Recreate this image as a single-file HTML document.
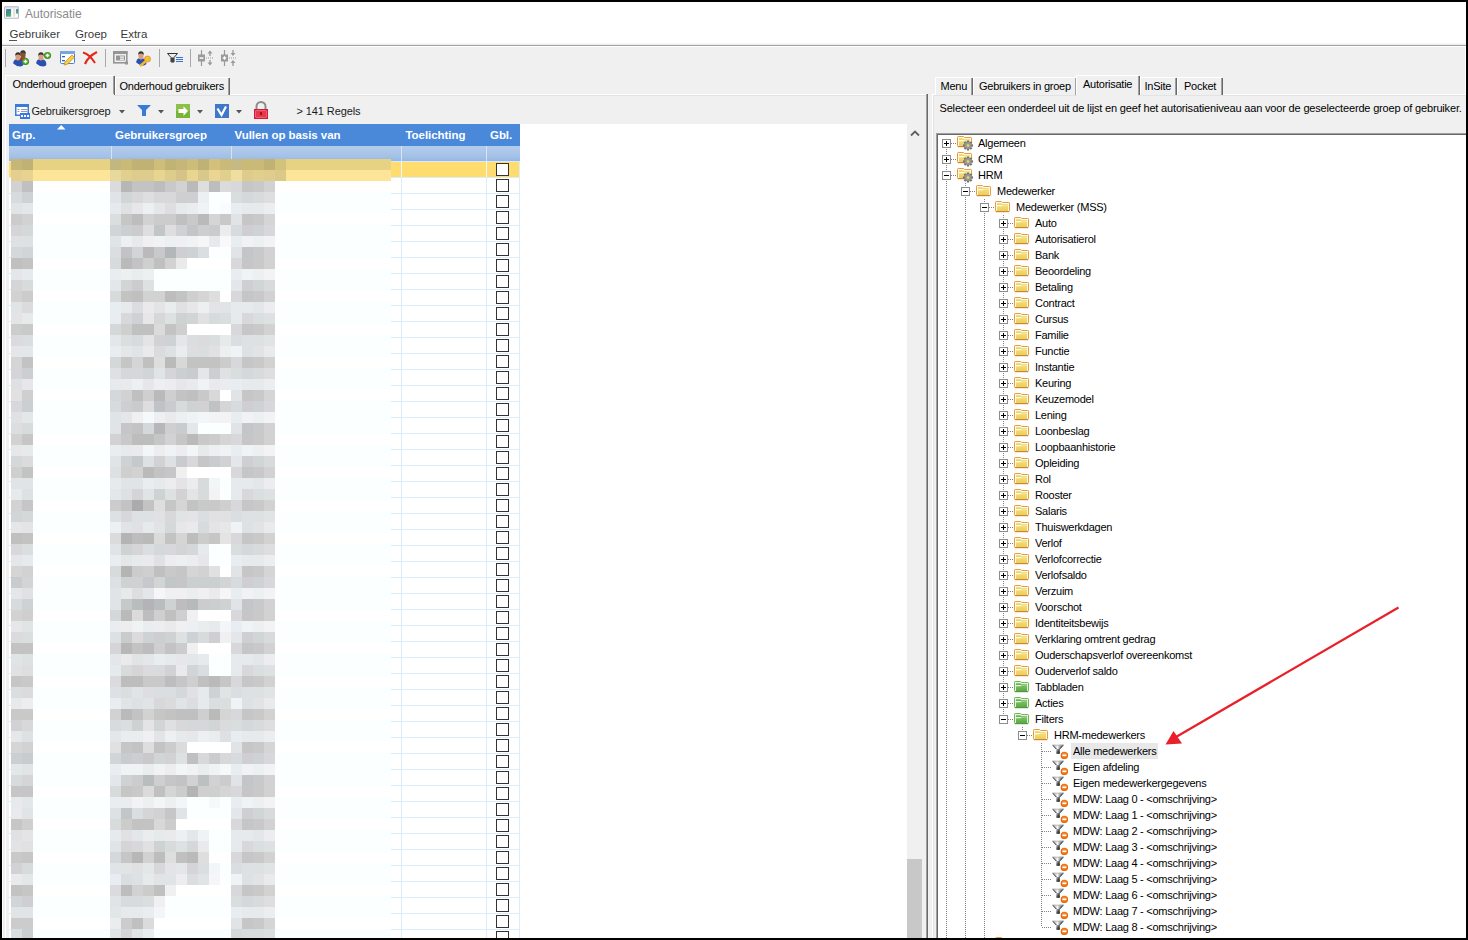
<!DOCTYPE html><html><head><meta charset="utf-8"><style>html,body{margin:0;padding:0;}body{width:1468px;height:940px;position:relative;overflow:hidden;background:#000;font-family:"Liberation Sans", sans-serif;}svg{overflow:visible}</style></head><body><svg width="0" height="0" style="position:absolute"><defs>
<linearGradient id="yg" x1="0" y1="0" x2="0" y2="1"><stop offset="0" stop-color="#f4e07a"/><stop offset="1" stop-color="#e6cf62"/></linearGradient>
<linearGradient id="gg" x1="0" y1="0" x2="0" y2="1"><stop offset="0" stop-color="#7cc265"/><stop offset="1" stop-color="#5ea84a"/></linearGradient>
<symbol id="fold" viewBox="0 0 16 16">
 <path d="M0.5 3.2q0-0.7 0.7-0.7h5.3l1 1h6.3q0.7 0 0.7 0.7v7.6q0 0.7-0.7 0.7h-12.6q-0.7 0-0.7-0.7z" fill="#fffbe8" stroke="#e99a3a" stroke-width="1"/>
 <path d="M2 4.2h4.3l1 1h5.7v0.9h-11z" fill="#ebd46c"/>
 <path d="M2 7.2h4.6l1-1h5.4v5.8h-11z" fill="url(#yg)"/>
 <path d="M1 12.6h13" stroke="#d8822a" stroke-width="1.2"/>
</symbol>
<symbol id="foldg" viewBox="0 0 16 16">
 <path d="M0.5 3.2q0-0.7 0.7-0.7h5.3l1 1h6.3q0.7 0 0.7 0.7v7.6q0 0.7-0.7 0.7h-12.6q-0.7 0-0.7-0.7z" fill="#e8f0e4" stroke="#6cbb4e" stroke-width="1"/>
 <path d="M2 4.2h4.3l1 1h5.7v0.9h-11z" fill="#6cb652"/>
 <path d="M2 7.2h4.6l1-1h5.4v5.8h-11z" fill="url(#gg)"/>
 <path d="M1 12.6h13" stroke="#4e9a3a" stroke-width="1.2"/>
</symbol>
<symbol id="gear" viewBox="0 0 16 16">
 <path d="M0.5 2.2q0-0.7 0.7-0.7h5.3l1 1h6.3q0.7 0 0.7 0.7v7.6q0 0.7-0.7 0.7h-12.6q-0.7 0-0.7-0.7z" fill="#fffbe8" stroke="#e99a3a" stroke-width="1"/>
 <path d="M2 3.2h4.3l1 1h5.7v0.9h-11z" fill="#ebd46c"/>
 <path d="M2 6.2h4.6l1-1h5.4v5.8h-11z" fill="url(#yg)"/>
 <path d="M1 11.6h8" stroke="#d8822a" stroke-width="1.2"/>
 <g transform="translate(11 10.5)">
  <g fill="#707070">
   <rect x="-1.1" y="-5" width="2.2" height="10"/>
   <rect x="-1.1" y="-5" width="2.2" height="10" transform="rotate(45)"/>
   <rect x="-1.1" y="-5" width="2.2" height="10" transform="rotate(90)"/>
   <rect x="-1.1" y="-5" width="2.2" height="10" transform="rotate(135)"/>
  </g>
  <circle r="3.7" fill="#888"/>
  <circle r="3" fill="#9a9a9a"/>
  <rect x="-1.1" y="-1.1" width="2.2" height="2.2" fill="#f6d84a"/>
 </g>
</symbol>
<linearGradient id="fg" x1="0" y1="0" x2="1" y2="0"><stop offset="0" stop-color="#9a9a9a"/><stop offset="0.45" stop-color="#f4f6fa"/><stop offset="1" stop-color="#2a2a2a"/></linearGradient>
<linearGradient id="sg" x1="0" y1="0" x2="1" y2="1"><stop offset="0" stop-color="#c8ccd4"/><stop offset="0.5" stop-color="#555"/><stop offset="1" stop-color="#000"/></linearGradient>
<symbol id="filt" viewBox="0 0 16 16">
 <path d="M0.3 1.8h11.4l-4 4.2v4.8h-3.4v-4.8z" fill="url(#fg)"/>
 <path d="M0.8 2.2h10.4" stroke="#b8b8b8" stroke-width="0.9"/>
 <path d="M0.8 2.3l3.8 4M11.2 2.3l-3.8 4" stroke="#2e2e2e" stroke-width="1"/>
 <path d="M4.3 6h3.4v4.8h-3.4z" fill="url(#sg)"/>
 <circle cx="12.4" cy="12.4" r="3.7" fill="#e26a12"/>
 <circle cx="12.4" cy="12" r="2.6" fill="#f68a2c"/>
 <rect x="10.5" y="11.6" width="3.9" height="1.4" fill="#fff"/>
</symbol>
<symbol id="plus" viewBox="0 0 9 9">
 <rect x="0.5" y="0.5" width="8" height="8" fill="#fff" stroke="#8c8c8c"/>
 <path d="M2 4.5h5M4.5 2v5" stroke="#000" stroke-width="1"/>
</symbol>
<symbol id="minus" viewBox="0 0 9 9">
 <rect x="0.5" y="0.5" width="8" height="8" fill="#fff" stroke="#8c8c8c"/>
 <path d="M2 4.5h5" stroke="#000" stroke-width="1"/>
</symbol>
</defs></svg><div style="position:absolute;left:2px;top:2px;width:1464px;height:936px;background:#f0f0f0;"></div>
<div style="position:absolute;left:2px;top:2px;width:1464px;height:41px;background:#fff;"></div>
<div style="position:absolute;left:2px;top:43px;width:1464px;height:2px;background:linear-gradient(#f8f8f8,#ececec);"></div>
<div style="position:absolute;left:2px;top:45px;width:1464px;height:1px;background:#a0a0a0;"></div>
<div style="position:absolute;left:2px;top:46px;width:1464px;height:1px;background:#fff;"></div>
<div style="position:absolute;left:2px;top:47px;width:1px;height:891px;background:#fff;"></div>
<div style="position:absolute;left:1465px;top:47px;width:1px;height:891px;background:#fff;"></div>
<svg style="position:absolute;left:0;top:0" width="24" height="24" viewBox="0 0 24 24"><defs><linearGradient id="tg" x1="0" y1="0" x2="0.6" y2="1"><stop offset="0" stop-color="#6a88c8"/><stop offset="0.45" stop-color="#3d8a90"/><stop offset="1" stop-color="#5cae68"/></linearGradient></defs><rect x="4.6" y="6.8" width="13.8" height="11.5" rx="0.8" fill="#fff" stroke="#b4b8c0" stroke-width="1.1"/><rect x="5.2" y="7.3" width="12.6" height="1.2" fill="#d0d4da"/><rect x="6" y="9" width="5.1" height="7.7" fill="url(#tg)"/><rect x="12.9" y="9" width="2.5" height="7.7" fill="#e4e4e4"/><rect x="16.1" y="9" width="2" height="4.6" fill="url(#tg)"/></svg>
<div style="position:absolute;left:25px;top:7.84px;font-size:12px;line-height:12px;color:#8a8a8a;font-weight:normal;white-space:nowrap;">Autorisatie</div>
<div style="position:absolute;left:9.5px;top:29.27px;font-size:11.5px;line-height:11.5px;color:#3a3a3a;font-weight:normal;white-space:nowrap;">Gebruiker</div>
<div style="position:absolute;left:75px;top:29.27px;font-size:11.5px;line-height:11.5px;color:#3a3a3a;font-weight:normal;white-space:nowrap;">Groep</div>
<div style="position:absolute;left:120.5px;top:29.27px;font-size:11.5px;line-height:11.5px;color:#3a3a3a;font-weight:normal;white-space:nowrap;">Extra</div>
<div style="position:absolute;left:9px;top:40px;width:8px;height:1px;background:#555;"></div>
<div style="position:absolute;left:82px;top:40px;width:3px;height:1px;background:#555;"></div>
<div style="position:absolute;left:126px;top:40px;width:5px;height:1px;background:#555;"></div>
<div style="position:absolute;left:5px;top:49px;width:1px;height:18px;background:#a8a8a8;"></div>
<div style="position:absolute;left:105px;top:49px;width:1px;height:18px;background:#a8a8a8;"></div>
<div style="position:absolute;left:159px;top:49px;width:1px;height:18px;background:#a8a8a8;"></div>
<div style="position:absolute;left:190px;top:49px;width:1px;height:18px;background:#a8a8a8;"></div>
<svg style="position:absolute;left:0;top:44px" width="260" height="28" viewBox="0 44 260 28"><path d="M18.2 61.5 q0-3.5 3-4.2 l1.8 1 l1.8-1 q3.5 0.8 3.6 5.2 q-0.6 1.8-3 2 q-4 0-7.2-3z" fill="#c02020"/><ellipse cx="23" cy="54.8" rx="2.6" ry="3.6" fill="#8a5030"/><path d="M20.2 53.8 q-0.2-3.6 2.8-3.6 q3 0 2.8 3.8 q-0.8-1.4-2.6-1.6 q-1.8 0-3 1.4z" fill="#333"/><path d="M13.2 63.5 q0-3.5 3-4.2 l1.8 1 l1.8-1 q3.5 0.8 3.6 5.2 q-0.6 1.8-3 2 q-4 0-7.2-3z" fill="#2a4fb0"/><ellipse cx="18" cy="56.8" rx="2.6" ry="3.6" fill="#d9a07a"/><path d="M15.2 55.8 q-0.2-3.6 2.8-3.6 q3 0 2.8 3.8 q-0.8-1.4-2.6-1.6 q-1.8 0-3 1.4z" fill="#333"/><circle cx="25.5" cy="61.5" r="3.6" fill="#3d8f25"/><circle cx="25.5" cy="61.2" r="2.6" fill="#58a838"/><path d="M23.7 61.5h3.6M25.5 59.7v3.6" stroke="#fff" stroke-width="1.3"/><path d="M36.2 63.5 q0-3.5 3-4.2 l1.8 1 l1.8-1 q3.5 0.8 3.6 5.2 q-0.6 1.8-3 2 q-4 0-7.2-3z" fill="#2a4fb0"/><ellipse cx="41" cy="56.8" rx="2.6" ry="3.6" fill="#d9a07a"/><path d="M38.2 55.8 q-0.2-3.6 2.8-3.6 q3 0 2.8 3.8 q-0.8-1.4-2.6-1.6 q-1.8 0-3 1.4z" fill="#333"/><circle cx="47.5" cy="55.5" r="3.6" fill="#3d8f25"/><circle cx="47.5" cy="55.2" r="2.6" fill="#58a838"/><path d="M45.7 55.5h3.6M47.5 53.7v3.6" stroke="#fff" stroke-width="1.3"/><rect x="60.5" y="51.5" width="14" height="12" rx="1" fill="#fff" stroke="#4a7fd0"/><rect x="60" y="51" width="15" height="3" fill="#7aa6e0"/><rect x="62" y="56" width="3" height="1.3" fill="#2a5fd0"/><rect x="62" y="60" width="3" height="1.3" fill="#2a5fd0"/><path d="M64 65 l1-3 l7-7 l2.3 2.3 l-7 7z" fill="#f2d040" stroke="#d08a20" stroke-width="0.8"/><path d="M83 52.5 C88 54 92 58 95 63" stroke="#e02418" stroke-width="2" fill="none"/><path d="M97 52 C91 55 87 59 85 64" stroke="#e8281c" stroke-width="2.2" fill="none"/><rect x="113.8" y="51.8" width="13" height="11" fill="none" stroke="#959595" stroke-width="1.6"/><rect x="113" y="51" width="14.5" height="3" fill="#959595"/><rect x="116" y="55.5" width="9" height="5" fill="#959595"/><rect x="120" y="56.5" width="4" height="1.2" fill="#fff"/><rect x="120" y="58.6" width="4" height="1.2" fill="#fff"/><rect x="125" y="61.5" width="3" height="3" fill="#959595"/><path d="M136.2 62.5 q0-3.5 3-4.2 l1.8 1 l1.8-1 q3.5 0.8 3.6 5.2 q-0.6 1.8-3 2 q-4 0-7.2-3z" fill="#2a4fb0"/><ellipse cx="141" cy="55.8" rx="2.6" ry="3.6" fill="#d9a07a"/><path d="M138.2 54.8 q-0.2-3.6 2.8-3.6 q3 0 2.8 3.8 q-0.8-1.4-2.6-1.6 q-1.8 0-3 1.4z" fill="#333"/><circle cx="147.5" cy="59" r="3" fill="#f2c030" stroke="#e09020" stroke-width="0.8"/><path d="M140 66 l6-5" stroke="#f0b828" stroke-width="2.4"/><path d="M167.5 53.5h10l-3.5 4v4.5h-3v-4.5z" fill="#e8eef4" stroke="#333" stroke-width="1"/><path d="M171 57.5h3v4.5h-3z" fill="#444"/><path d="M176 57.5h7M176 59.5h7M176 61.5h7" stroke="#3a74d0" stroke-width="1"/><path d="M201.5 50v16" stroke="#999" stroke-width="1.2"/><rect x="198" y="54.5" width="7" height="7" fill="#9a9a9a"/><path d="M206 58h8" stroke="#9a9a9a" stroke-width="1.2" stroke-dasharray="1 1"/><rect x="199.6" y="57.3" width="3.8" height="1.5" fill="#fff"/><path d="M210 52v4M210 60v4" stroke="#999" stroke-width="1.3"/><path d="M207.5 53.5l2.5-3l2.5 3zM207.5 62.5l2.5 3l2.5-3z" fill="#999"/><path d="M224.5 50v16" stroke="#999" stroke-width="1.2"/><rect x="221" y="54.5" width="7" height="7" fill="#9a9a9a"/><path d="M229 58h8" stroke="#9a9a9a" stroke-width="1.2" stroke-dasharray="1 1"/><path d="M222.8 58h3.4M224.5 56.3v3.4" stroke="#fff" stroke-width="1.3"/><path d="M233 50v4M233 62v4" stroke="#999" stroke-width="1.3"/><path d="M230.5 53l2.5 3l2.5-3zM230.5 63l2.5-3l2.5 3z" fill="#999"/></svg>
<div style="position:absolute;left:5px;top:94px;width:923px;height:844px;background:#f0f0f0;"></div>
<div style="position:absolute;left:5px;top:94px;width:922px;height:1px;background:#fff;"></div>
<div style="position:absolute;left:5px;top:94px;width:1px;height:844px;background:#fff;"></div>
<div style="position:absolute;left:6px;top:95px;width:920px;height:1px;background:#e3e3e3;"></div>
<div style="position:absolute;left:926px;top:94px;width:1px;height:844px;background:#a0a0a0;"></div>
<div style="position:absolute;left:927px;top:94px;width:1px;height:844px;background:#696969;"></div>
<div style="position:absolute;left:115px;top:77px;width:115px;height:18px;background:#f0f0f0;"></div>
<div style="position:absolute;left:115px;top:77px;width:114px;height:1px;background:#fff;"></div>
<div style="position:absolute;left:115px;top:77px;width:1px;height:18px;background:#fff;"></div>
<div style="position:absolute;left:228px;top:78px;width:1px;height:17px;background:#a0a0a0;"></div>
<div style="position:absolute;left:229px;top:78px;width:1px;height:17px;background:#696969;"></div>
<div style="position:absolute;left:5px;top:75px;width:110px;height:20px;background:#f0f0f0;"></div>
<div style="position:absolute;left:5px;top:75px;width:109px;height:1px;background:#fff;"></div>
<div style="position:absolute;left:5px;top:75px;width:1px;height:20px;background:#fff;"></div>
<div style="position:absolute;left:113px;top:76px;width:1px;height:19px;background:#a0a0a0;"></div>
<div style="position:absolute;left:114px;top:76px;width:1px;height:19px;background:#696969;"></div>
<div style="position:absolute;left:6px;top:94px;width:108px;height:2px;background:#f0f0f0;"></div>
<div style="position:absolute;left:12.5px;top:78.69px;font-size:11px;line-height:11px;color:#000;font-weight:normal;white-space:nowrap;letter-spacing:-0.25px;">Onderhoud groepen</div>
<div style="position:absolute;left:119.5px;top:80.69px;font-size:11px;line-height:11px;color:#000;font-weight:normal;white-space:nowrap;letter-spacing:-0.25px;">Onderhoud gebruikers</div>
<div style="position:absolute;left:31.5px;top:105.69px;font-size:11px;line-height:11px;color:#1a1a1a;font-weight:normal;white-space:nowrap;letter-spacing:-0.2px;">Gebruikersgroep</div>
<div style="position:absolute;left:296.5px;top:106.19px;font-size:11px;line-height:11px;color:#1a1a1a;font-weight:normal;white-space:nowrap;letter-spacing:-0.1px;">&gt; 141 Regels</div>
<svg style="position:absolute;left:0;top:100px" width="280" height="22" viewBox="0 100 280 22"><rect x="15" y="104" width="14" height="12" fill="#3a7ad8"/><rect x="16.5" y="107" width="11" height="7.5" fill="#fff"/><rect x="17.5" y="109" width="2" height="1" fill="#99a"/><rect x="21" y="109" width="6" height="1" fill="#99a"/><rect x="17.5" y="111" width="2" height="1" fill="#99a"/><rect x="21" y="111" width="6" height="1" fill="#99a"/><rect x="20" y="113" width="10" height="6" fill="#3a7ad8"/><rect x="21" y="115" width="2" height="2" fill="#fff"/><rect x="24" y="115" width="2" height="2" fill="#fff"/><rect x="27" y="115" width="2" height="2" fill="#fff"/><path d="M119 110h6l-3 3.5z" fill="#555"/><path d="M158 110h6l-3 3.5z" fill="#555"/><path d="M197 110h6l-3 3.5z" fill="#555"/><path d="M236 110h6l-3 3.5z" fill="#555"/><path d="M137 105h14l-5 5v6h-4v-6z" fill="#3a7ad8"/><rect x="176" y="104" width="14" height="14" fill="#78b43a"/><rect x="176" y="104" width="14" height="7" fill="#8cc048"/><path d="M178.5 109h5v-2.8l4.5 4.8l-4.5 4.8v-2.8h-5z" fill="#fff"/><rect x="215" y="104" width="14" height="14" fill="#3f78c8"/><path d="M217.5 108.5l4 6.5l4.5-8.5" stroke="#fff" stroke-width="2.2" fill="none"/><path d="M256.5 109v-2.5a4.5 4.5 0 0 1 9 0v2.5" stroke="#8c8c8c" stroke-width="2" fill="none"/><rect x="254" y="109" width="14" height="10" fill="#d81838"/><rect x="255.5" y="110.5" width="11" height="7" fill="#f3b0b8"/><rect x="256" y="111" width="10" height="6" fill="#e83848"/><rect x="260" y="112" width="2" height="3" fill="#a01020"/></svg>
<div style="position:absolute;left:9px;top:124px;width:898px;height:814px;background:#fff;"></div>
<div style="position:absolute;left:9px;top:124px;width:511px;height:22px;background:#4a88da;"></div>
<div style="position:absolute;left:9px;top:146px;width:511px;height:15px;background:linear-gradient(#b4cdeb,#a4c1e8 70%,#95b6e2);"></div>
<div style="position:absolute;left:111px;top:146px;width:1px;height:15px;background:#d4e3f5;"></div>
<div style="position:absolute;left:231px;top:146px;width:1px;height:15px;background:#d4e3f5;"></div>
<div style="position:absolute;left:401px;top:146px;width:1px;height:15px;background:#d4e3f5;"></div>
<div style="position:absolute;left:486px;top:146px;width:1px;height:15px;background:#d4e3f5;"></div>
<svg style="position:absolute;left:57px;top:125px" width="9" height="5"><path d="M0 4.5h8.5l-4.25-4.5z" fill="#fff"/></svg>
<div style="position:absolute;left:12px;top:129.77px;font-size:11.5px;line-height:11.5px;color:#fff;font-weight:bold;white-space:nowrap;letter-spacing:-0.05px;">Grp.</div>
<div style="position:absolute;left:115px;top:129.77px;font-size:11.5px;line-height:11.5px;color:#fff;font-weight:bold;white-space:nowrap;letter-spacing:-0.05px;">Gebruikersgroep</div>
<div style="position:absolute;left:234.5px;top:129.77px;font-size:11.5px;line-height:11.5px;color:#fff;font-weight:bold;white-space:nowrap;letter-spacing:-0.05px;">Vullen op basis van</div>
<div style="position:absolute;left:405.5px;top:129.77px;font-size:11.5px;line-height:11.5px;color:#fff;font-weight:bold;white-space:nowrap;letter-spacing:-0.05px;">Toelichting</div>
<div style="position:absolute;left:490px;top:129.77px;font-size:11.5px;line-height:11.5px;color:#fff;font-weight:bold;white-space:nowrap;letter-spacing:-0.05px;">Gbl.</div>
<div style="position:absolute;left:9px;top:161px;width:511px;height:1px;background:#dbeafa;"></div>
<div style="position:absolute;left:9px;top:177px;width:511px;height:1px;background:#daedfc;"></div>
<div style="position:absolute;left:9px;top:193px;width:511px;height:1px;background:#daedfc;"></div>
<div style="position:absolute;left:9px;top:209px;width:511px;height:1px;background:#daedfc;"></div>
<div style="position:absolute;left:9px;top:225px;width:511px;height:1px;background:#daedfc;"></div>
<div style="position:absolute;left:9px;top:241px;width:511px;height:1px;background:#daedfc;"></div>
<div style="position:absolute;left:9px;top:257px;width:511px;height:1px;background:#daedfc;"></div>
<div style="position:absolute;left:9px;top:273px;width:511px;height:1px;background:#daedfc;"></div>
<div style="position:absolute;left:9px;top:289px;width:511px;height:1px;background:#daedfc;"></div>
<div style="position:absolute;left:9px;top:305px;width:511px;height:1px;background:#daedfc;"></div>
<div style="position:absolute;left:9px;top:321px;width:511px;height:1px;background:#daedfc;"></div>
<div style="position:absolute;left:9px;top:337px;width:511px;height:1px;background:#daedfc;"></div>
<div style="position:absolute;left:9px;top:353px;width:511px;height:1px;background:#daedfc;"></div>
<div style="position:absolute;left:9px;top:369px;width:511px;height:1px;background:#daedfc;"></div>
<div style="position:absolute;left:9px;top:385px;width:511px;height:1px;background:#daedfc;"></div>
<div style="position:absolute;left:9px;top:401px;width:511px;height:1px;background:#daedfc;"></div>
<div style="position:absolute;left:9px;top:417px;width:511px;height:1px;background:#daedfc;"></div>
<div style="position:absolute;left:9px;top:433px;width:511px;height:1px;background:#daedfc;"></div>
<div style="position:absolute;left:9px;top:449px;width:511px;height:1px;background:#daedfc;"></div>
<div style="position:absolute;left:9px;top:465px;width:511px;height:1px;background:#daedfc;"></div>
<div style="position:absolute;left:9px;top:481px;width:511px;height:1px;background:#daedfc;"></div>
<div style="position:absolute;left:9px;top:497px;width:511px;height:1px;background:#daedfc;"></div>
<div style="position:absolute;left:9px;top:513px;width:511px;height:1px;background:#daedfc;"></div>
<div style="position:absolute;left:9px;top:529px;width:511px;height:1px;background:#daedfc;"></div>
<div style="position:absolute;left:9px;top:545px;width:511px;height:1px;background:#daedfc;"></div>
<div style="position:absolute;left:9px;top:561px;width:511px;height:1px;background:#daedfc;"></div>
<div style="position:absolute;left:9px;top:577px;width:511px;height:1px;background:#daedfc;"></div>
<div style="position:absolute;left:9px;top:593px;width:511px;height:1px;background:#daedfc;"></div>
<div style="position:absolute;left:9px;top:609px;width:511px;height:1px;background:#daedfc;"></div>
<div style="position:absolute;left:9px;top:625px;width:511px;height:1px;background:#daedfc;"></div>
<div style="position:absolute;left:9px;top:641px;width:511px;height:1px;background:#daedfc;"></div>
<div style="position:absolute;left:9px;top:657px;width:511px;height:1px;background:#daedfc;"></div>
<div style="position:absolute;left:9px;top:673px;width:511px;height:1px;background:#daedfc;"></div>
<div style="position:absolute;left:9px;top:689px;width:511px;height:1px;background:#daedfc;"></div>
<div style="position:absolute;left:9px;top:705px;width:511px;height:1px;background:#daedfc;"></div>
<div style="position:absolute;left:9px;top:721px;width:511px;height:1px;background:#daedfc;"></div>
<div style="position:absolute;left:9px;top:737px;width:511px;height:1px;background:#daedfc;"></div>
<div style="position:absolute;left:9px;top:753px;width:511px;height:1px;background:#daedfc;"></div>
<div style="position:absolute;left:9px;top:769px;width:511px;height:1px;background:#daedfc;"></div>
<div style="position:absolute;left:9px;top:785px;width:511px;height:1px;background:#daedfc;"></div>
<div style="position:absolute;left:9px;top:801px;width:511px;height:1px;background:#daedfc;"></div>
<div style="position:absolute;left:9px;top:817px;width:511px;height:1px;background:#daedfc;"></div>
<div style="position:absolute;left:9px;top:833px;width:511px;height:1px;background:#daedfc;"></div>
<div style="position:absolute;left:9px;top:849px;width:511px;height:1px;background:#daedfc;"></div>
<div style="position:absolute;left:9px;top:865px;width:511px;height:1px;background:#daedfc;"></div>
<div style="position:absolute;left:9px;top:881px;width:511px;height:1px;background:#daedfc;"></div>
<div style="position:absolute;left:9px;top:897px;width:511px;height:1px;background:#daedfc;"></div>
<div style="position:absolute;left:9px;top:913px;width:511px;height:1px;background:#daedfc;"></div>
<div style="position:absolute;left:9px;top:929px;width:511px;height:1px;background:#daedfc;"></div>
<div style="position:absolute;left:9px;top:945px;width:511px;height:1px;background:#daedfc;"></div>
<div style="position:absolute;left:111px;top:162px;width:1px;height:776px;background:#daedfc;"></div>
<div style="position:absolute;left:231px;top:162px;width:1px;height:776px;background:#daedfc;"></div>
<div style="position:absolute;left:401px;top:162px;width:1px;height:776px;background:#daedfc;"></div>
<div style="position:absolute;left:486px;top:162px;width:1px;height:776px;background:#daedfc;"></div>
<div style="position:absolute;left:519px;top:162px;width:1px;height:776px;background:#daedfc;"></div>
<div style="position:absolute;left:9px;top:162px;width:510px;height:15px;background:#fedc6e;"></div>
<div style="position:absolute;left:111px;top:162px;width:1px;height:15px;background:#f0f6fd;"></div>
<div style="position:absolute;left:231px;top:162px;width:1px;height:15px;background:#f0f6fd;"></div>
<div style="position:absolute;left:401px;top:162px;width:1px;height:15px;background:#f0f6fd;"></div>
<div style="position:absolute;left:486px;top:162px;width:1px;height:15px;background:#f0f6fd;"></div>
<div style="position:absolute;left:496px;top:163px;width:11px;height:11px;background:#fff;border:1px solid #333;"></div>
<div style="position:absolute;left:496px;top:179px;width:11px;height:11px;background:#fff;border:1px solid #333;"></div>
<div style="position:absolute;left:496px;top:195px;width:11px;height:11px;background:#fff;border:1px solid #333;"></div>
<div style="position:absolute;left:496px;top:211px;width:11px;height:11px;background:#fff;border:1px solid #333;"></div>
<div style="position:absolute;left:496px;top:227px;width:11px;height:11px;background:#fff;border:1px solid #333;"></div>
<div style="position:absolute;left:496px;top:243px;width:11px;height:11px;background:#fff;border:1px solid #333;"></div>
<div style="position:absolute;left:496px;top:259px;width:11px;height:11px;background:#fff;border:1px solid #333;"></div>
<div style="position:absolute;left:496px;top:275px;width:11px;height:11px;background:#fff;border:1px solid #333;"></div>
<div style="position:absolute;left:496px;top:291px;width:11px;height:11px;background:#fff;border:1px solid #333;"></div>
<div style="position:absolute;left:496px;top:307px;width:11px;height:11px;background:#fff;border:1px solid #333;"></div>
<div style="position:absolute;left:496px;top:323px;width:11px;height:11px;background:#fff;border:1px solid #333;"></div>
<div style="position:absolute;left:496px;top:339px;width:11px;height:11px;background:#fff;border:1px solid #333;"></div>
<div style="position:absolute;left:496px;top:355px;width:11px;height:11px;background:#fff;border:1px solid #333;"></div>
<div style="position:absolute;left:496px;top:371px;width:11px;height:11px;background:#fff;border:1px solid #333;"></div>
<div style="position:absolute;left:496px;top:387px;width:11px;height:11px;background:#fff;border:1px solid #333;"></div>
<div style="position:absolute;left:496px;top:403px;width:11px;height:11px;background:#fff;border:1px solid #333;"></div>
<div style="position:absolute;left:496px;top:419px;width:11px;height:11px;background:#fff;border:1px solid #333;"></div>
<div style="position:absolute;left:496px;top:435px;width:11px;height:11px;background:#fff;border:1px solid #333;"></div>
<div style="position:absolute;left:496px;top:451px;width:11px;height:11px;background:#fff;border:1px solid #333;"></div>
<div style="position:absolute;left:496px;top:467px;width:11px;height:11px;background:#fff;border:1px solid #333;"></div>
<div style="position:absolute;left:496px;top:483px;width:11px;height:11px;background:#fff;border:1px solid #333;"></div>
<div style="position:absolute;left:496px;top:499px;width:11px;height:11px;background:#fff;border:1px solid #333;"></div>
<div style="position:absolute;left:496px;top:515px;width:11px;height:11px;background:#fff;border:1px solid #333;"></div>
<div style="position:absolute;left:496px;top:531px;width:11px;height:11px;background:#fff;border:1px solid #333;"></div>
<div style="position:absolute;left:496px;top:547px;width:11px;height:11px;background:#fff;border:1px solid #333;"></div>
<div style="position:absolute;left:496px;top:563px;width:11px;height:11px;background:#fff;border:1px solid #333;"></div>
<div style="position:absolute;left:496px;top:579px;width:11px;height:11px;background:#fff;border:1px solid #333;"></div>
<div style="position:absolute;left:496px;top:595px;width:11px;height:11px;background:#fff;border:1px solid #333;"></div>
<div style="position:absolute;left:496px;top:611px;width:11px;height:11px;background:#fff;border:1px solid #333;"></div>
<div style="position:absolute;left:496px;top:627px;width:11px;height:11px;background:#fff;border:1px solid #333;"></div>
<div style="position:absolute;left:496px;top:643px;width:11px;height:11px;background:#fff;border:1px solid #333;"></div>
<div style="position:absolute;left:496px;top:659px;width:11px;height:11px;background:#fff;border:1px solid #333;"></div>
<div style="position:absolute;left:496px;top:675px;width:11px;height:11px;background:#fff;border:1px solid #333;"></div>
<div style="position:absolute;left:496px;top:691px;width:11px;height:11px;background:#fff;border:1px solid #333;"></div>
<div style="position:absolute;left:496px;top:707px;width:11px;height:11px;background:#fff;border:1px solid #333;"></div>
<div style="position:absolute;left:496px;top:723px;width:11px;height:11px;background:#fff;border:1px solid #333;"></div>
<div style="position:absolute;left:496px;top:739px;width:11px;height:11px;background:#fff;border:1px solid #333;"></div>
<div style="position:absolute;left:496px;top:755px;width:11px;height:11px;background:#fff;border:1px solid #333;"></div>
<div style="position:absolute;left:496px;top:771px;width:11px;height:11px;background:#fff;border:1px solid #333;"></div>
<div style="position:absolute;left:496px;top:787px;width:11px;height:11px;background:#fff;border:1px solid #333;"></div>
<div style="position:absolute;left:496px;top:803px;width:11px;height:11px;background:#fff;border:1px solid #333;"></div>
<div style="position:absolute;left:496px;top:819px;width:11px;height:11px;background:#fff;border:1px solid #333;"></div>
<div style="position:absolute;left:496px;top:835px;width:11px;height:11px;background:#fff;border:1px solid #333;"></div>
<div style="position:absolute;left:496px;top:851px;width:11px;height:11px;background:#fff;border:1px solid #333;"></div>
<div style="position:absolute;left:496px;top:867px;width:11px;height:11px;background:#fff;border:1px solid #333;"></div>
<div style="position:absolute;left:496px;top:883px;width:11px;height:11px;background:#fff;border:1px solid #333;"></div>
<div style="position:absolute;left:496px;top:899px;width:11px;height:11px;background:#fff;border:1px solid #333;"></div>
<div style="position:absolute;left:496px;top:915px;width:11px;height:11px;background:#fff;border:1px solid #333;"></div>
<div style="position:absolute;left:496px;top:931px;width:11px;height:11px;background:#fff;border:1px solid #333;"></div>
<div style="position:absolute;left:907px;top:124px;width:15px;height:814px;background:#f0f0f0;"></div>
<svg style="position:absolute;left:910px;top:129px" width="10" height="8"><path d="M1 6.5l4-4l4 4" stroke="#606060" stroke-width="1.8" fill="none"/></svg>
<div style="position:absolute;left:907px;top:859px;width:15px;height:79px;background:#c8c8c8;"></div>
<div style="position:absolute;left:11px;top:159px;width:380px;height:779px;background:#fff"></div>
<svg style="position:absolute;left:0;top:0" width="520" height="940"><path fill="#c6b778" d="M11 159h11v11h-11zM176 159h11v11h-11z"/><path fill="#c0b175" d="M22 159h11v11h-11zM132 159h11v11h-11zM143 159h11v11h-11zM198 159h11v11h-11zM264 159h11v11h-11z"/><path fill="#e7d284" d="M33 159h11v11h-11zM44 159h11v11h-11zM55 159h11v11h-11zM66 159h11v11h-11zM77 159h11v11h-11zM88 159h11v11h-11zM99 159h11v11h-11zM286 159h11v11h-11zM297 159h11v11h-11zM308 159h11v11h-11zM319 159h11v11h-11zM330 159h11v11h-11zM341 159h11v11h-11zM352 159h11v11h-11zM363 159h11v11h-11zM374 159h11v11h-11zM385 159h6v11h-6z"/><path fill="#c3b781" d="M110 159h11v11h-11z"/><path fill="#c9ba78" d="M121 159h11v11h-11zM220 159h11v11h-11zM242 159h11v11h-11zM253 159h11v11h-11z"/><path fill="#cfbd7b" d="M154 159h11v11h-11z"/><path fill="#c0b475" d="M165 159h11v11h-11z"/><path fill="#ccbd7b" d="M187 159h11v11h-11z"/><path fill="#d2c07b" d="M209 159h11v11h-11z"/><path fill="#c6ba84" d="M231 159h11v11h-11z"/><path fill="#d2c37b" d="M275 159h11v11h-11z"/><path fill="#e4cf90" d="M11 170h11v11h-11z"/><path fill="#e7d290" d="M22 170h11v11h-11z"/><path fill="#fce499" d="M33 170h11v11h-11zM44 170h11v11h-11zM55 170h11v11h-11zM66 170h11v11h-11zM77 170h11v11h-11zM88 170h11v11h-11zM99 170h11v11h-11zM286 170h11v11h-11zM297 170h11v11h-11zM308 170h11v11h-11zM319 170h11v11h-11zM330 170h11v11h-11zM341 170h11v11h-11zM352 170h11v11h-11zM363 170h11v11h-11zM374 170h11v11h-11zM385 170h6v11h-6z"/><path fill="#e7d89c" d="M110 170h11v11h-11z"/><path fill="#e1cf8d" d="M121 170h11v11h-11zM220 170h11v11h-11zM253 170h11v11h-11z"/><path fill="#decc8d" d="M132 170h11v11h-11zM143 170h11v11h-11zM165 170h11v11h-11zM242 170h11v11h-11z"/><path fill="#e7d590" d="M154 170h11v11h-11z"/><path fill="#d5c38a" d="M176 170h11v11h-11z"/><path fill="#ead590" d="M187 170h11v11h-11z"/><path fill="#d8c98a" d="M198 170h11v11h-11z"/><path fill="#ead593" d="M209 170h11v11h-11z"/><path fill="#f0de9f" d="M231 170h11v11h-11z"/><path fill="#e1cc8d" d="M264 170h11v11h-11z"/><path fill="#dbc98a" d="M275 170h11v11h-11z"/><path fill="#d2d2d2" d="M11 181h11v11h-11zM176 181h11v11h-11zM264 181h11v11h-11zM22 214h11v11h-11zM143 214h11v11h-11zM165 258h11v11h-11zM264 258h11v11h-11zM11 291h11v11h-11zM143 291h11v11h-11zM154 291h11v11h-11zM264 291h11v11h-11zM264 324h11v11h-11zM264 357h11v11h-11zM121 390h11v11h-11zM11 434h11v11h-11zM165 434h11v11h-11zM264 434h11v11h-11zM132 467h11v11h-11zM264 467h11v11h-11zM11 500h11v11h-11zM264 500h11v11h-11zM264 533h11v11h-11zM22 566h11v11h-11zM198 566h11v11h-11zM11 610h11v11h-11zM264 610h11v11h-11zM264 643h11v11h-11zM264 676h11v11h-11zM143 709h11v11h-11zM264 709h11v11h-11zM22 742h11v11h-11zM264 786h11v11h-11zM264 819h11v11h-11zM143 852h11v11h-11zM264 852h11v11h-11zM132 885h11v11h-11zM264 885h11v11h-11z"/><path fill="#c0c0c0" d="M22 181h11v11h-11zM176 214h11v11h-11zM11 258h11v11h-11zM154 258h11v11h-11zM132 291h11v11h-11zM132 324h11v11h-11zM143 324h11v11h-11zM143 357h11v11h-11zM132 390h11v11h-11zM187 390h11v11h-11zM11 533h11v11h-11zM154 566h11v11h-11zM165 610h11v11h-11zM198 676h11v11h-11zM176 709h11v11h-11zM187 709h11v11h-11zM154 786h11v11h-11zM176 852h11v11h-11zM154 885h11v11h-11zM132 918h11v11h-11z"/><path fill="#dbdbde" d="M110 181h11v11h-11zM22 302h11v11h-11zM11 335h11v11h-11zM198 335h11v11h-11zM154 346h11v11h-11zM22 456h11v11h-11zM110 533h11v11h-11zM11 632h11v11h-11zM132 632h11v11h-11zM143 665h11v11h-11zM110 676h11v11h-11zM22 687h11v11h-11zM165 698h11v11h-11zM220 720h11v11h-11zM110 885h11v11h-11z"/><path fill="#b7b7b7" d="M121 181h11v11h-11zM121 643h11v11h-11zM132 852h11v11h-11z"/><path fill="#c3c3c3" d="M132 181h11v11h-11zM143 181h11v11h-11zM22 258h11v11h-11zM132 258h11v11h-11zM121 291h11v11h-11zM176 291h11v11h-11zM165 324h11v11h-11zM22 357h11v11h-11zM187 357h11v11h-11zM198 357h11v11h-11zM209 357h11v11h-11zM176 390h11v11h-11zM22 467h11v11h-11zM154 467h11v11h-11zM121 500h11v11h-11zM143 500h11v11h-11zM187 500h11v11h-11zM22 533h11v11h-11zM165 533h11v11h-11zM11 643h11v11h-11zM22 643h11v11h-11zM132 643h11v11h-11zM165 643h11v11h-11zM132 709h11v11h-11zM165 709h11v11h-11zM132 742h11v11h-11zM154 742h11v11h-11zM132 819h11v11h-11zM143 819h11v11h-11zM11 885h11v11h-11z"/><path fill="#bdbdbd" d="M154 181h11v11h-11zM209 181h11v11h-11zM132 214h11v11h-11zM165 291h11v11h-11zM132 434h11v11h-11zM143 434h11v11h-11zM132 533h11v11h-11zM187 533h11v11h-11zM143 610h11v11h-11zM143 643h11v11h-11zM121 676h11v11h-11zM132 676h11v11h-11zM165 676h11v11h-11zM154 852h11v11h-11zM121 885h11v11h-11z"/><path fill="#c9c9c9" d="M165 181h11v11h-11zM253 181h11v11h-11zM187 214h11v11h-11zM220 214h11v11h-11zM253 214h11v11h-11zM253 258h11v11h-11zM253 291h11v11h-11zM22 324h11v11h-11zM253 324h11v11h-11zM253 357h11v11h-11zM198 390h11v11h-11zM253 390h11v11h-11zM121 434h11v11h-11zM198 434h11v11h-11zM253 434h11v11h-11zM253 467h11v11h-11zM198 500h11v11h-11zM209 500h11v11h-11zM253 500h11v11h-11zM253 533h11v11h-11zM165 566h11v11h-11zM253 566h11v11h-11zM253 610h11v11h-11zM253 643h11v11h-11zM22 676h11v11h-11zM143 676h11v11h-11zM154 676h11v11h-11zM253 676h11v11h-11zM11 709h11v11h-11zM22 709h11v11h-11zM253 709h11v11h-11zM253 742h11v11h-11zM132 786h11v11h-11zM253 786h11v11h-11zM253 819h11v11h-11zM11 852h11v11h-11zM253 852h11v11h-11zM253 885h11v11h-11zM253 918h11v11h-11z"/><path fill="#bababa" d="M187 181h11v11h-11zM198 214h11v11h-11zM121 258h11v11h-11zM165 357h11v11h-11zM154 390h11v11h-11zM187 434h11v11h-11zM143 467h11v11h-11zM143 533h11v11h-11zM121 610h11v11h-11zM209 676h11v11h-11zM121 709h11v11h-11zM209 709h11v11h-11zM187 852h11v11h-11z"/><path fill="#dedede" d="M198 181h11v11h-11zM209 291h11v11h-11zM154 357h11v11h-11zM154 500h11v11h-11zM143 742h11v11h-11zM165 852h11v11h-11zM198 852h11v11h-11z"/><path fill="#dbdbdb" d="M220 181h11v11h-11zM154 324h11v11h-11zM154 533h11v11h-11zM132 610h11v11h-11zM176 742h11v11h-11zM143 786h11v11h-11zM143 918h11v11h-11z"/><path fill="#d8d8db" d="M231 181h11v11h-11zM132 192h11v11h-11zM154 192h11v11h-11zM165 192h11v11h-11zM264 225h11v11h-11zM231 258h11v11h-11zM231 291h11v11h-11zM121 313h11v11h-11zM242 313h11v11h-11zM231 324h11v11h-11zM231 357h11v11h-11zM11 401h11v11h-11zM264 401h11v11h-11zM231 434h11v11h-11zM187 456h11v11h-11zM231 467h11v11h-11zM242 489h11v11h-11zM231 500h11v11h-11zM121 511h11v11h-11zM165 511h11v11h-11zM231 533h11v11h-11zM11 544h11v11h-11zM165 544h11v11h-11zM264 577h11v11h-11zM231 610h11v11h-11zM231 643h11v11h-11zM242 665h11v11h-11zM231 676h11v11h-11zM154 698h11v11h-11zM231 709h11v11h-11zM22 720h11v11h-11zM176 720h11v11h-11zM198 753h11v11h-11zM220 753h11v11h-11zM264 753h11v11h-11zM231 786h11v11h-11zM231 819h11v11h-11zM132 841h11v11h-11zM242 841h11v11h-11zM231 852h11v11h-11zM154 863h11v11h-11zM231 885h11v11h-11z"/><path fill="#c6c6c6" d="M242 181h11v11h-11zM121 214h11v11h-11zM242 214h11v11h-11zM242 258h11v11h-11zM242 291h11v11h-11zM242 324h11v11h-11zM121 357h11v11h-11zM242 357h11v11h-11zM242 390h11v11h-11zM22 434h11v11h-11zM154 434h11v11h-11zM176 434h11v11h-11zM242 434h11v11h-11zM165 467h11v11h-11zM242 467h11v11h-11zM22 500h11v11h-11zM165 500h11v11h-11zM242 500h11v11h-11zM209 533h11v11h-11zM242 533h11v11h-11zM176 566h11v11h-11zM242 566h11v11h-11zM242 610h11v11h-11zM242 643h11v11h-11zM11 676h11v11h-11zM176 676h11v11h-11zM220 676h11v11h-11zM242 676h11v11h-11zM154 709h11v11h-11zM242 709h11v11h-11zM121 742h11v11h-11zM242 742h11v11h-11zM11 786h11v11h-11zM22 786h11v11h-11zM121 786h11v11h-11zM242 786h11v11h-11zM11 819h11v11h-11zM242 819h11v11h-11zM22 852h11v11h-11zM121 852h11v11h-11zM242 852h11v11h-11zM22 885h11v11h-11zM242 885h11v11h-11zM242 918h11v11h-11z"/><path fill="#d8dbde" d="M11 192h11v11h-11zM231 225h11v11h-11zM132 335h11v11h-11zM110 401h11v11h-11zM231 401h11v11h-11zM231 577h11v11h-11zM11 599h11v11h-11zM110 720h11v11h-11zM231 753h11v11h-11zM132 896h11v11h-11z"/><path fill="#cfd2d2" d="M22 192h11v11h-11zM176 313h11v11h-11zM187 401h11v11h-11zM121 456h11v11h-11zM154 489h11v11h-11zM121 544h11v11h-11zM121 577h11v11h-11zM132 577h11v11h-11zM22 599h11v11h-11zM165 599h11v11h-11zM220 599h11v11h-11zM143 632h11v11h-11zM165 632h11v11h-11zM132 720h11v11h-11zM121 775h11v11h-11zM154 841h11v11h-11z"/><path fill="#fcffff" d="M33 192h11v11h-11zM44 192h11v11h-11zM55 192h11v11h-11zM66 192h11v11h-11zM77 192h11v11h-11zM88 192h11v11h-11zM99 192h11v11h-11zM209 192h11v11h-11zM220 192h11v11h-11zM275 192h11v11h-11zM286 192h11v11h-11zM297 192h11v11h-11zM308 192h11v11h-11zM319 192h11v11h-11zM330 192h11v11h-11zM341 192h11v11h-11zM352 192h11v11h-11zM363 192h11v11h-11zM374 192h11v11h-11zM385 192h6v11h-6zM33 203h11v11h-11zM44 203h11v11h-11zM55 203h11v11h-11zM66 203h11v11h-11zM77 203h11v11h-11zM88 203h11v11h-11zM99 203h11v11h-11zM209 203h11v11h-11zM275 203h11v11h-11zM286 203h11v11h-11zM297 203h11v11h-11zM308 203h11v11h-11zM319 203h11v11h-11zM330 203h11v11h-11zM341 203h11v11h-11zM352 203h11v11h-11zM363 203h11v11h-11zM374 203h11v11h-11zM385 203h6v11h-6zM33 225h11v11h-11zM44 225h11v11h-11zM55 225h11v11h-11zM66 225h11v11h-11zM77 225h11v11h-11zM88 225h11v11h-11zM99 225h11v11h-11zM275 225h11v11h-11zM286 225h11v11h-11zM297 225h11v11h-11zM308 225h11v11h-11zM319 225h11v11h-11zM330 225h11v11h-11zM341 225h11v11h-11zM352 225h11v11h-11zM363 225h11v11h-11zM374 225h11v11h-11zM385 225h6v11h-6zM33 236h11v11h-11zM44 236h11v11h-11zM55 236h11v11h-11zM66 236h11v11h-11zM77 236h11v11h-11zM88 236h11v11h-11zM99 236h11v11h-11zM275 236h11v11h-11zM286 236h11v11h-11zM297 236h11v11h-11zM308 236h11v11h-11zM319 236h11v11h-11zM330 236h11v11h-11zM341 236h11v11h-11zM352 236h11v11h-11zM363 236h11v11h-11zM374 236h11v11h-11zM385 236h6v11h-6zM33 247h11v11h-11zM44 247h11v11h-11zM55 247h11v11h-11zM66 247h11v11h-11zM77 247h11v11h-11zM88 247h11v11h-11zM99 247h11v11h-11zM209 247h11v11h-11zM220 247h11v11h-11zM275 247h11v11h-11zM286 247h11v11h-11zM297 247h11v11h-11zM308 247h11v11h-11zM319 247h11v11h-11zM330 247h11v11h-11zM341 247h11v11h-11zM352 247h11v11h-11zM363 247h11v11h-11zM374 247h11v11h-11zM385 247h6v11h-6zM33 269h11v11h-11zM44 269h11v11h-11zM55 269h11v11h-11zM66 269h11v11h-11zM77 269h11v11h-11zM88 269h11v11h-11zM99 269h11v11h-11zM154 269h11v11h-11zM165 269h11v11h-11zM176 269h11v11h-11zM187 269h11v11h-11zM198 269h11v11h-11zM209 269h11v11h-11zM220 269h11v11h-11zM275 269h11v11h-11zM286 269h11v11h-11zM297 269h11v11h-11zM308 269h11v11h-11zM319 269h11v11h-11zM330 269h11v11h-11zM341 269h11v11h-11zM352 269h11v11h-11zM363 269h11v11h-11zM374 269h11v11h-11zM385 269h6v11h-6zM33 280h11v11h-11zM44 280h11v11h-11zM55 280h11v11h-11zM66 280h11v11h-11zM77 280h11v11h-11zM88 280h11v11h-11zM99 280h11v11h-11zM154 280h11v11h-11zM165 280h11v11h-11zM176 280h11v11h-11zM187 280h11v11h-11zM198 280h11v11h-11zM209 280h11v11h-11zM220 280h11v11h-11zM275 280h11v11h-11zM286 280h11v11h-11zM297 280h11v11h-11zM308 280h11v11h-11zM319 280h11v11h-11zM330 280h11v11h-11zM341 280h11v11h-11zM352 280h11v11h-11zM363 280h11v11h-11zM374 280h11v11h-11zM385 280h6v11h-6zM33 302h11v11h-11zM44 302h11v11h-11zM55 302h11v11h-11zM66 302h11v11h-11zM77 302h11v11h-11zM88 302h11v11h-11zM99 302h11v11h-11zM275 302h11v11h-11zM286 302h11v11h-11zM297 302h11v11h-11zM308 302h11v11h-11zM319 302h11v11h-11zM330 302h11v11h-11zM341 302h11v11h-11zM352 302h11v11h-11zM363 302h11v11h-11zM374 302h11v11h-11zM385 302h6v11h-6zM33 313h11v11h-11zM44 313h11v11h-11zM55 313h11v11h-11zM66 313h11v11h-11zM77 313h11v11h-11zM88 313h11v11h-11zM99 313h11v11h-11zM275 313h11v11h-11zM286 313h11v11h-11zM297 313h11v11h-11zM308 313h11v11h-11zM319 313h11v11h-11zM330 313h11v11h-11zM341 313h11v11h-11zM352 313h11v11h-11zM363 313h11v11h-11zM374 313h11v11h-11zM385 313h6v11h-6zM33 335h11v11h-11zM44 335h11v11h-11zM55 335h11v11h-11zM66 335h11v11h-11zM77 335h11v11h-11zM88 335h11v11h-11zM99 335h11v11h-11zM275 335h11v11h-11zM286 335h11v11h-11zM297 335h11v11h-11zM308 335h11v11h-11zM319 335h11v11h-11zM330 335h11v11h-11zM341 335h11v11h-11zM352 335h11v11h-11zM363 335h11v11h-11zM374 335h11v11h-11zM385 335h6v11h-6zM33 346h11v11h-11zM44 346h11v11h-11zM55 346h11v11h-11zM66 346h11v11h-11zM77 346h11v11h-11zM88 346h11v11h-11zM99 346h11v11h-11zM275 346h11v11h-11zM286 346h11v11h-11zM297 346h11v11h-11zM308 346h11v11h-11zM319 346h11v11h-11zM330 346h11v11h-11zM341 346h11v11h-11zM352 346h11v11h-11zM363 346h11v11h-11zM374 346h11v11h-11zM385 346h6v11h-6zM33 368h11v11h-11zM44 368h11v11h-11zM55 368h11v11h-11zM66 368h11v11h-11zM77 368h11v11h-11zM88 368h11v11h-11zM99 368h11v11h-11zM275 368h11v11h-11zM286 368h11v11h-11zM297 368h11v11h-11zM308 368h11v11h-11zM319 368h11v11h-11zM330 368h11v11h-11zM341 368h11v11h-11zM352 368h11v11h-11zM363 368h11v11h-11zM374 368h11v11h-11zM385 368h6v11h-6zM33 379h11v11h-11zM44 379h11v11h-11zM55 379h11v11h-11zM66 379h11v11h-11zM77 379h11v11h-11zM88 379h11v11h-11zM99 379h11v11h-11zM275 379h11v11h-11zM286 379h11v11h-11zM297 379h11v11h-11zM308 379h11v11h-11zM319 379h11v11h-11zM330 379h11v11h-11zM341 379h11v11h-11zM352 379h11v11h-11zM363 379h11v11h-11zM374 379h11v11h-11zM385 379h6v11h-6zM33 401h11v11h-11zM44 401h11v11h-11zM55 401h11v11h-11zM66 401h11v11h-11zM77 401h11v11h-11zM88 401h11v11h-11zM99 401h11v11h-11zM275 401h11v11h-11zM286 401h11v11h-11zM297 401h11v11h-11zM308 401h11v11h-11zM319 401h11v11h-11zM330 401h11v11h-11zM341 401h11v11h-11zM352 401h11v11h-11zM363 401h11v11h-11zM374 401h11v11h-11zM385 401h6v11h-6zM33 412h11v11h-11zM44 412h11v11h-11zM55 412h11v11h-11zM66 412h11v11h-11zM77 412h11v11h-11zM88 412h11v11h-11zM99 412h11v11h-11zM275 412h11v11h-11zM286 412h11v11h-11zM297 412h11v11h-11zM308 412h11v11h-11zM319 412h11v11h-11zM330 412h11v11h-11zM341 412h11v11h-11zM352 412h11v11h-11zM363 412h11v11h-11zM374 412h11v11h-11zM385 412h6v11h-6zM33 423h11v11h-11zM44 423h11v11h-11zM55 423h11v11h-11zM66 423h11v11h-11zM77 423h11v11h-11zM88 423h11v11h-11zM99 423h11v11h-11zM198 423h11v11h-11zM209 423h11v11h-11zM220 423h11v11h-11zM275 423h11v11h-11zM286 423h11v11h-11zM297 423h11v11h-11zM308 423h11v11h-11zM319 423h11v11h-11zM330 423h11v11h-11zM341 423h11v11h-11zM352 423h11v11h-11zM363 423h11v11h-11zM374 423h11v11h-11zM385 423h6v11h-6zM33 445h11v11h-11zM44 445h11v11h-11zM55 445h11v11h-11zM66 445h11v11h-11zM77 445h11v11h-11zM88 445h11v11h-11zM99 445h11v11h-11zM275 445h11v11h-11zM286 445h11v11h-11zM297 445h11v11h-11zM308 445h11v11h-11zM319 445h11v11h-11zM330 445h11v11h-11zM341 445h11v11h-11zM352 445h11v11h-11zM363 445h11v11h-11zM374 445h11v11h-11zM385 445h6v11h-6zM33 456h11v11h-11zM44 456h11v11h-11zM55 456h11v11h-11zM66 456h11v11h-11zM77 456h11v11h-11zM88 456h11v11h-11zM99 456h11v11h-11zM275 456h11v11h-11zM286 456h11v11h-11zM297 456h11v11h-11zM308 456h11v11h-11zM319 456h11v11h-11zM330 456h11v11h-11zM341 456h11v11h-11zM352 456h11v11h-11zM363 456h11v11h-11zM374 456h11v11h-11zM385 456h6v11h-6zM33 478h11v11h-11zM44 478h11v11h-11zM55 478h11v11h-11zM66 478h11v11h-11zM77 478h11v11h-11zM88 478h11v11h-11zM99 478h11v11h-11zM220 478h11v11h-11zM275 478h11v11h-11zM286 478h11v11h-11zM297 478h11v11h-11zM308 478h11v11h-11zM319 478h11v11h-11zM330 478h11v11h-11zM341 478h11v11h-11zM352 478h11v11h-11zM363 478h11v11h-11zM374 478h11v11h-11zM385 478h6v11h-6zM33 489h11v11h-11zM44 489h11v11h-11zM55 489h11v11h-11zM66 489h11v11h-11zM77 489h11v11h-11zM88 489h11v11h-11zM99 489h11v11h-11zM220 489h11v11h-11zM275 489h11v11h-11zM286 489h11v11h-11zM297 489h11v11h-11zM308 489h11v11h-11zM319 489h11v11h-11zM330 489h11v11h-11zM341 489h11v11h-11zM352 489h11v11h-11zM363 489h11v11h-11zM374 489h11v11h-11zM385 489h6v11h-6zM33 511h11v11h-11zM44 511h11v11h-11zM55 511h11v11h-11zM66 511h11v11h-11zM77 511h11v11h-11zM88 511h11v11h-11zM99 511h11v11h-11zM275 511h11v11h-11zM286 511h11v11h-11zM297 511h11v11h-11zM308 511h11v11h-11zM319 511h11v11h-11zM330 511h11v11h-11zM341 511h11v11h-11zM352 511h11v11h-11zM363 511h11v11h-11zM374 511h11v11h-11zM385 511h6v11h-6zM33 522h11v11h-11zM44 522h11v11h-11zM55 522h11v11h-11zM66 522h11v11h-11zM77 522h11v11h-11zM88 522h11v11h-11zM99 522h11v11h-11zM275 522h11v11h-11zM286 522h11v11h-11zM297 522h11v11h-11zM308 522h11v11h-11zM319 522h11v11h-11zM330 522h11v11h-11zM341 522h11v11h-11zM352 522h11v11h-11zM363 522h11v11h-11zM374 522h11v11h-11zM385 522h6v11h-6zM33 544h11v11h-11zM44 544h11v11h-11zM55 544h11v11h-11zM66 544h11v11h-11zM77 544h11v11h-11zM88 544h11v11h-11zM99 544h11v11h-11zM209 544h11v11h-11zM220 544h11v11h-11zM275 544h11v11h-11zM286 544h11v11h-11zM297 544h11v11h-11zM308 544h11v11h-11zM319 544h11v11h-11zM330 544h11v11h-11zM341 544h11v11h-11zM352 544h11v11h-11zM363 544h11v11h-11zM374 544h11v11h-11zM385 544h6v11h-6zM33 555h11v11h-11zM44 555h11v11h-11zM55 555h11v11h-11zM66 555h11v11h-11zM77 555h11v11h-11zM88 555h11v11h-11zM99 555h11v11h-11zM209 555h11v11h-11zM220 555h11v11h-11zM275 555h11v11h-11zM286 555h11v11h-11zM297 555h11v11h-11zM308 555h11v11h-11zM319 555h11v11h-11zM330 555h11v11h-11zM341 555h11v11h-11zM352 555h11v11h-11zM363 555h11v11h-11zM374 555h11v11h-11zM385 555h6v11h-6zM33 577h11v11h-11zM44 577h11v11h-11zM55 577h11v11h-11zM66 577h11v11h-11zM77 577h11v11h-11zM88 577h11v11h-11zM99 577h11v11h-11zM275 577h11v11h-11zM286 577h11v11h-11zM297 577h11v11h-11zM308 577h11v11h-11zM319 577h11v11h-11zM330 577h11v11h-11zM341 577h11v11h-11zM352 577h11v11h-11zM363 577h11v11h-11zM374 577h11v11h-11zM385 577h6v11h-6zM33 588h11v11h-11zM44 588h11v11h-11zM55 588h11v11h-11zM66 588h11v11h-11zM77 588h11v11h-11zM88 588h11v11h-11zM99 588h11v11h-11zM275 588h11v11h-11zM286 588h11v11h-11zM297 588h11v11h-11zM308 588h11v11h-11zM319 588h11v11h-11zM330 588h11v11h-11zM341 588h11v11h-11zM352 588h11v11h-11zM363 588h11v11h-11zM374 588h11v11h-11zM385 588h6v11h-6zM33 599h11v11h-11zM44 599h11v11h-11zM55 599h11v11h-11zM66 599h11v11h-11zM77 599h11v11h-11zM88 599h11v11h-11zM99 599h11v11h-11zM275 599h11v11h-11zM286 599h11v11h-11zM297 599h11v11h-11zM308 599h11v11h-11zM319 599h11v11h-11zM330 599h11v11h-11zM341 599h11v11h-11zM352 599h11v11h-11zM363 599h11v11h-11zM374 599h11v11h-11zM385 599h6v11h-6zM33 621h11v11h-11zM44 621h11v11h-11zM55 621h11v11h-11zM66 621h11v11h-11zM77 621h11v11h-11zM88 621h11v11h-11zM99 621h11v11h-11zM275 621h11v11h-11zM286 621h11v11h-11zM297 621h11v11h-11zM308 621h11v11h-11zM319 621h11v11h-11zM330 621h11v11h-11zM341 621h11v11h-11zM352 621h11v11h-11zM363 621h11v11h-11zM374 621h11v11h-11zM385 621h6v11h-6zM33 632h11v11h-11zM44 632h11v11h-11zM55 632h11v11h-11zM66 632h11v11h-11zM77 632h11v11h-11zM88 632h11v11h-11zM99 632h11v11h-11zM275 632h11v11h-11zM286 632h11v11h-11zM297 632h11v11h-11zM308 632h11v11h-11zM319 632h11v11h-11zM330 632h11v11h-11zM341 632h11v11h-11zM352 632h11v11h-11zM363 632h11v11h-11zM374 632h11v11h-11zM385 632h6v11h-6zM33 654h11v11h-11zM44 654h11v11h-11zM55 654h11v11h-11zM66 654h11v11h-11zM77 654h11v11h-11zM88 654h11v11h-11zM99 654h11v11h-11zM209 654h11v11h-11zM220 654h11v11h-11zM275 654h11v11h-11zM286 654h11v11h-11zM297 654h11v11h-11zM308 654h11v11h-11zM319 654h11v11h-11zM330 654h11v11h-11zM341 654h11v11h-11zM352 654h11v11h-11zM363 654h11v11h-11zM374 654h11v11h-11zM385 654h6v11h-6zM33 665h11v11h-11zM44 665h11v11h-11zM55 665h11v11h-11zM66 665h11v11h-11zM77 665h11v11h-11zM88 665h11v11h-11zM99 665h11v11h-11zM209 665h11v11h-11zM220 665h11v11h-11zM275 665h11v11h-11zM286 665h11v11h-11zM297 665h11v11h-11zM308 665h11v11h-11zM319 665h11v11h-11zM330 665h11v11h-11zM341 665h11v11h-11zM352 665h11v11h-11zM363 665h11v11h-11zM374 665h11v11h-11zM385 665h6v11h-6zM33 687h11v11h-11zM44 687h11v11h-11zM55 687h11v11h-11zM66 687h11v11h-11zM77 687h11v11h-11zM88 687h11v11h-11zM99 687h11v11h-11zM275 687h11v11h-11zM286 687h11v11h-11zM297 687h11v11h-11zM308 687h11v11h-11zM319 687h11v11h-11zM330 687h11v11h-11zM341 687h11v11h-11zM352 687h11v11h-11zM363 687h11v11h-11zM374 687h11v11h-11zM385 687h6v11h-6zM33 698h11v11h-11zM44 698h11v11h-11zM55 698h11v11h-11zM66 698h11v11h-11zM77 698h11v11h-11zM88 698h11v11h-11zM99 698h11v11h-11zM275 698h11v11h-11zM286 698h11v11h-11zM297 698h11v11h-11zM308 698h11v11h-11zM319 698h11v11h-11zM330 698h11v11h-11zM341 698h11v11h-11zM352 698h11v11h-11zM363 698h11v11h-11zM374 698h11v11h-11zM385 698h6v11h-6zM33 720h11v11h-11zM44 720h11v11h-11zM55 720h11v11h-11zM66 720h11v11h-11zM77 720h11v11h-11zM88 720h11v11h-11zM99 720h11v11h-11zM275 720h11v11h-11zM286 720h11v11h-11zM297 720h11v11h-11zM308 720h11v11h-11zM319 720h11v11h-11zM330 720h11v11h-11zM341 720h11v11h-11zM352 720h11v11h-11zM363 720h11v11h-11zM374 720h11v11h-11zM385 720h6v11h-6zM33 731h11v11h-11zM44 731h11v11h-11zM55 731h11v11h-11zM66 731h11v11h-11zM77 731h11v11h-11zM88 731h11v11h-11zM99 731h11v11h-11zM275 731h11v11h-11zM286 731h11v11h-11zM297 731h11v11h-11zM308 731h11v11h-11zM319 731h11v11h-11zM330 731h11v11h-11zM341 731h11v11h-11zM352 731h11v11h-11zM363 731h11v11h-11zM374 731h11v11h-11zM385 731h6v11h-6zM33 753h11v11h-11zM44 753h11v11h-11zM55 753h11v11h-11zM66 753h11v11h-11zM77 753h11v11h-11zM88 753h11v11h-11zM99 753h11v11h-11zM275 753h11v11h-11zM286 753h11v11h-11zM297 753h11v11h-11zM308 753h11v11h-11zM319 753h11v11h-11zM330 753h11v11h-11zM341 753h11v11h-11zM352 753h11v11h-11zM363 753h11v11h-11zM374 753h11v11h-11zM385 753h6v11h-6zM33 764h11v11h-11zM44 764h11v11h-11zM55 764h11v11h-11zM66 764h11v11h-11zM77 764h11v11h-11zM88 764h11v11h-11zM99 764h11v11h-11zM275 764h11v11h-11zM286 764h11v11h-11zM297 764h11v11h-11zM308 764h11v11h-11zM319 764h11v11h-11zM330 764h11v11h-11zM341 764h11v11h-11zM352 764h11v11h-11zM363 764h11v11h-11zM374 764h11v11h-11zM385 764h6v11h-6zM33 775h11v11h-11zM44 775h11v11h-11zM55 775h11v11h-11zM66 775h11v11h-11zM77 775h11v11h-11zM88 775h11v11h-11zM99 775h11v11h-11zM275 775h11v11h-11zM286 775h11v11h-11zM297 775h11v11h-11zM308 775h11v11h-11zM319 775h11v11h-11zM330 775h11v11h-11zM341 775h11v11h-11zM352 775h11v11h-11zM363 775h11v11h-11zM374 775h11v11h-11zM385 775h6v11h-6zM33 797h11v11h-11zM44 797h11v11h-11zM55 797h11v11h-11zM66 797h11v11h-11zM77 797h11v11h-11zM88 797h11v11h-11zM99 797h11v11h-11zM187 797h11v11h-11zM198 797h11v11h-11zM220 797h11v11h-11zM275 797h11v11h-11zM286 797h11v11h-11zM297 797h11v11h-11zM308 797h11v11h-11zM319 797h11v11h-11zM330 797h11v11h-11zM341 797h11v11h-11zM352 797h11v11h-11zM363 797h11v11h-11zM374 797h11v11h-11zM385 797h6v11h-6zM33 808h11v11h-11zM44 808h11v11h-11zM55 808h11v11h-11zM66 808h11v11h-11zM77 808h11v11h-11zM88 808h11v11h-11zM99 808h11v11h-11zM187 808h11v11h-11zM198 808h11v11h-11zM209 808h11v11h-11zM220 808h11v11h-11zM275 808h11v11h-11zM286 808h11v11h-11zM297 808h11v11h-11zM308 808h11v11h-11zM319 808h11v11h-11zM330 808h11v11h-11zM341 808h11v11h-11zM352 808h11v11h-11zM363 808h11v11h-11zM374 808h11v11h-11zM385 808h6v11h-6zM33 830h11v11h-11zM44 830h11v11h-11zM55 830h11v11h-11zM66 830h11v11h-11zM77 830h11v11h-11zM88 830h11v11h-11zM99 830h11v11h-11zM209 830h11v11h-11zM220 830h11v11h-11zM275 830h11v11h-11zM286 830h11v11h-11zM297 830h11v11h-11zM308 830h11v11h-11zM319 830h11v11h-11zM330 830h11v11h-11zM341 830h11v11h-11zM352 830h11v11h-11zM363 830h11v11h-11zM374 830h11v11h-11zM385 830h6v11h-6zM33 841h11v11h-11zM44 841h11v11h-11zM55 841h11v11h-11zM66 841h11v11h-11zM77 841h11v11h-11zM88 841h11v11h-11zM99 841h11v11h-11zM209 841h11v11h-11zM220 841h11v11h-11zM275 841h11v11h-11zM286 841h11v11h-11zM297 841h11v11h-11zM308 841h11v11h-11zM319 841h11v11h-11zM330 841h11v11h-11zM341 841h11v11h-11zM352 841h11v11h-11zM363 841h11v11h-11zM374 841h11v11h-11zM385 841h6v11h-6zM33 863h11v11h-11zM44 863h11v11h-11zM55 863h11v11h-11zM66 863h11v11h-11zM77 863h11v11h-11zM88 863h11v11h-11zM99 863h11v11h-11zM220 863h11v11h-11zM275 863h11v11h-11zM286 863h11v11h-11zM297 863h11v11h-11zM308 863h11v11h-11zM319 863h11v11h-11zM330 863h11v11h-11zM341 863h11v11h-11zM352 863h11v11h-11zM363 863h11v11h-11zM374 863h11v11h-11zM385 863h6v11h-6zM33 874h11v11h-11zM44 874h11v11h-11zM55 874h11v11h-11zM66 874h11v11h-11zM77 874h11v11h-11zM88 874h11v11h-11zM99 874h11v11h-11zM220 874h11v11h-11zM275 874h11v11h-11zM286 874h11v11h-11zM297 874h11v11h-11zM308 874h11v11h-11zM319 874h11v11h-11zM330 874h11v11h-11zM341 874h11v11h-11zM352 874h11v11h-11zM363 874h11v11h-11zM374 874h11v11h-11zM385 874h6v11h-6zM33 896h11v11h-11zM44 896h11v11h-11zM55 896h11v11h-11zM66 896h11v11h-11zM77 896h11v11h-11zM88 896h11v11h-11zM99 896h11v11h-11zM165 896h11v11h-11zM176 896h11v11h-11zM187 896h11v11h-11zM198 896h11v11h-11zM209 896h11v11h-11zM220 896h11v11h-11zM275 896h11v11h-11zM286 896h11v11h-11zM297 896h11v11h-11zM308 896h11v11h-11zM319 896h11v11h-11zM330 896h11v11h-11zM341 896h11v11h-11zM352 896h11v11h-11zM363 896h11v11h-11zM374 896h11v11h-11zM385 896h6v11h-6zM33 907h11v11h-11zM44 907h11v11h-11zM55 907h11v11h-11zM66 907h11v11h-11zM77 907h11v11h-11zM88 907h11v11h-11zM99 907h11v11h-11zM165 907h11v11h-11zM176 907h11v11h-11zM187 907h11v11h-11zM198 907h11v11h-11zM209 907h11v11h-11zM220 907h11v11h-11zM275 907h11v11h-11zM286 907h11v11h-11zM297 907h11v11h-11zM308 907h11v11h-11zM319 907h11v11h-11zM330 907h11v11h-11zM341 907h11v11h-11zM352 907h11v11h-11zM363 907h11v11h-11zM374 907h11v11h-11zM385 907h6v11h-6z"/><path fill="#dee4e7" d="M110 192h11v11h-11z"/><path fill="#d2d5d5" d="M121 192h11v11h-11zM121 280h11v11h-11zM253 280h11v11h-11zM187 313h11v11h-11zM143 368h11v11h-11zM253 456h11v11h-11zM11 511h11v11h-11zM176 544h11v11h-11zM22 577h11v11h-11zM154 577h11v11h-11zM220 577h11v11h-11zM253 632h11v11h-11zM154 720h11v11h-11zM209 720h11v11h-11zM154 753h11v11h-11zM253 808h11v11h-11zM11 896h11v11h-11z"/><path fill="#dedee1" d="M143 192h11v11h-11zM264 192h11v11h-11zM165 203h11v11h-11zM143 225h11v11h-11zM165 225h11v11h-11zM187 346h11v11h-11zM264 368h11v11h-11zM143 401h11v11h-11zM264 544h11v11h-11zM132 588h11v11h-11zM22 665h11v11h-11zM143 687h11v11h-11zM264 720h11v11h-11zM264 896h11v11h-11z"/><path fill="#cfcfd2" d="M176 192h11v11h-11zM187 192h11v11h-11zM242 225h11v11h-11zM176 247h11v11h-11zM242 280h11v11h-11zM121 401h11v11h-11zM242 401h11v11h-11zM165 423h11v11h-11zM242 456h11v11h-11zM242 577h11v11h-11zM209 632h11v11h-11zM242 632h11v11h-11zM242 753h11v11h-11zM154 775h11v11h-11zM242 808h11v11h-11zM22 896h11v11h-11z"/><path fill="#edf0f0" d="M198 192h11v11h-11zM143 203h11v11h-11zM253 236h11v11h-11zM121 269h11v11h-11zM143 269h11v11h-11zM253 269h11v11h-11zM198 302h11v11h-11zM220 346h11v11h-11zM154 379h11v11h-11zM176 412h11v11h-11zM253 412h11v11h-11zM209 445h11v11h-11zM253 445h11v11h-11zM176 555h11v11h-11zM253 588h11v11h-11zM253 621h11v11h-11zM165 731h11v11h-11zM198 731h11v11h-11zM253 764h11v11h-11zM143 797h11v11h-11zM165 797h11v11h-11zM253 797h11v11h-11zM176 830h11v11h-11z"/><path fill="#d8dede" d="M231 192h11v11h-11zM231 368h11v11h-11zM231 544h11v11h-11zM231 720h11v11h-11zM231 896h11v11h-11z"/><path fill="#d5d8db" d="M242 192h11v11h-11zM121 368h11v11h-11zM242 368h11v11h-11zM110 390h11v11h-11zM154 544h11v11h-11zM242 544h11v11h-11zM198 720h11v11h-11zM242 720h11v11h-11zM110 852h11v11h-11zM242 896h11v11h-11zM231 929h11v9h-11z"/><path fill="#d8dbdb" d="M253 192h11v11h-11zM110 258h11v11h-11zM22 280h11v11h-11zM264 280h11v11h-11zM110 291h11v11h-11zM209 313h11v11h-11zM253 368h11v11h-11zM176 401h11v11h-11zM22 423h11v11h-11zM264 456h11v11h-11zM198 478h11v11h-11zM198 489h11v11h-11zM198 522h11v11h-11zM253 544h11v11h-11zM110 566h11v11h-11zM198 632h11v11h-11zM264 632h11v11h-11zM121 665h11v11h-11zM154 665h11v11h-11zM253 720h11v11h-11zM11 775h11v11h-11zM110 786h11v11h-11zM264 808h11v11h-11zM110 819h11v11h-11zM165 841h11v11h-11zM22 863h11v11h-11zM121 896h11v11h-11zM253 896h11v11h-11zM242 929h11v9h-11zM253 929h11v9h-11z"/><path fill="#e1e4e4" d="M11 203h11v11h-11zM11 302h11v11h-11zM264 335h11v11h-11zM253 346h11v11h-11zM11 478h11v11h-11zM22 478h11v11h-11zM121 478h11v11h-11zM132 478h11v11h-11zM143 489h11v11h-11zM176 511h11v11h-11zM264 511h11v11h-11zM154 522h11v11h-11zM253 522h11v11h-11zM22 621h11v11h-11zM11 654h11v11h-11zM132 654h11v11h-11zM220 687h11v11h-11zM264 687h11v11h-11zM143 698h11v11h-11zM176 698h11v11h-11zM253 698h11v11h-11zM22 764h11v11h-11zM22 808h11v11h-11zM11 841h11v11h-11zM121 863h11v11h-11zM264 863h11v11h-11zM154 874h11v11h-11zM198 874h11v11h-11zM253 874h11v11h-11zM11 907h11v11h-11zM132 929h11v9h-11z"/><path fill="#e4e7e7" d="M22 203h11v11h-11zM154 203h11v11h-11zM22 346h11v11h-11zM121 346h11v11h-11zM198 368h11v11h-11zM22 412h11v11h-11zM11 522h11v11h-11zM121 555h11v11h-11zM11 588h11v11h-11zM187 654h11v11h-11zM11 764h11v11h-11zM22 797h11v11h-11zM143 863h11v11h-11zM22 874h11v11h-11z"/><path fill="#e7eaed" d="M110 203h11v11h-11zM209 236h11v11h-11zM22 269h11v11h-11zM121 302h11v11h-11zM231 302h11v11h-11zM231 313h11v11h-11zM110 379h11v11h-11zM121 445h11v11h-11zM110 478h11v11h-11zM231 478h11v11h-11zM11 489h11v11h-11zM231 489h11v11h-11zM198 544h11v11h-11zM22 555h11v11h-11zM165 654h11v11h-11zM198 654h11v11h-11zM231 654h11v11h-11zM110 665h11v11h-11zM231 665h11v11h-11zM198 687h11v11h-11zM198 698h11v11h-11zM11 797h11v11h-11zM110 830h11v11h-11zM231 830h11v11h-11zM231 841h11v11h-11z"/><path fill="#dee1e1" d="M121 203h11v11h-11zM11 236h11v11h-11zM22 236h11v11h-11zM143 280h11v11h-11zM165 313h11v11h-11zM264 313h11v11h-11zM242 335h11v11h-11zM253 335h11v11h-11zM165 346h11v11h-11zM11 379h11v11h-11zM110 467h11v11h-11zM22 489h11v11h-11zM165 489h11v11h-11zM264 489h11v11h-11zM132 511h11v11h-11zM242 511h11v11h-11zM253 511h11v11h-11zM176 632h11v11h-11zM22 654h11v11h-11zM264 665h11v11h-11zM242 687h11v11h-11zM253 687h11v11h-11zM132 698h11v11h-11zM165 720h11v11h-11zM22 731h11v11h-11zM176 753h11v11h-11zM176 841h11v11h-11zM264 841h11v11h-11zM242 863h11v11h-11zM253 863h11v11h-11z"/><path fill="#e7e7ea" d="M132 203h11v11h-11zM187 302h11v11h-11zM143 313h11v11h-11zM22 379h11v11h-11zM143 379h11v11h-11zM176 379h11v11h-11zM11 445h11v11h-11zM176 522h11v11h-11zM220 522h11v11h-11zM198 555h11v11h-11zM11 621h11v11h-11zM176 654h11v11h-11zM11 731h11v11h-11zM187 731h11v11h-11z"/><path fill="#e7eaea" d="M176 203h11v11h-11zM242 203h11v11h-11zM253 203h11v11h-11zM132 236h11v11h-11zM242 302h11v11h-11zM22 313h11v11h-11zM220 335h11v11h-11zM242 379h11v11h-11zM253 379h11v11h-11zM22 445h11v11h-11zM198 445h11v11h-11zM154 478h11v11h-11zM242 478h11v11h-11zM143 522h11v11h-11zM132 555h11v11h-11zM242 555h11v11h-11zM253 555h11v11h-11zM121 588h11v11h-11zM209 621h11v11h-11zM242 654h11v11h-11zM11 698h11v11h-11zM176 731h11v11h-11zM242 731h11v11h-11zM253 731h11v11h-11zM154 830h11v11h-11zM242 830h11v11h-11zM143 874h11v11h-11zM121 907h11v11h-11zM132 907h11v11h-11zM242 907h11v11h-11zM253 907h11v11h-11z"/><path fill="#eaeded" d="M187 203h11v11h-11zM220 225h11v11h-11zM132 269h11v11h-11zM165 302h11v11h-11zM176 346h11v11h-11zM187 478h11v11h-11zM198 621h11v11h-11zM154 654h11v11h-11zM132 731h11v11h-11zM209 731h11v11h-11zM143 764h11v11h-11zM198 764h11v11h-11zM143 830h11v11h-11zM110 918h11v11h-11z"/><path fill="#f0f3f6" d="M198 203h11v11h-11zM231 346h11v11h-11zM198 379h11v11h-11zM165 445h11v11h-11zM231 522h11v11h-11zM231 698h11v11h-11zM121 764h11v11h-11zM231 874h11v11h-11z"/><path fill="#f9fcff" d="M220 203h11v11h-11z"/><path fill="#e7edf0" d="M231 203h11v11h-11zM231 236h11v11h-11zM231 269h11v11h-11zM110 302h11v11h-11zM110 313h11v11h-11zM231 379h11v11h-11zM231 412h11v11h-11zM231 445h11v11h-11zM231 555h11v11h-11zM231 588h11v11h-11zM231 621h11v11h-11zM231 731h11v11h-11zM231 764h11v11h-11zM231 797h11v11h-11zM110 874h11v11h-11zM231 907h11v11h-11z"/><path fill="#ededf0" d="M264 203h11v11h-11zM264 302h11v11h-11zM165 379h11v11h-11zM264 379h11v11h-11zM154 445h11v11h-11zM176 445h11v11h-11zM165 478h11v11h-11zM264 478h11v11h-11zM165 555h11v11h-11zM187 555h11v11h-11zM264 555h11v11h-11zM187 588h11v11h-11zM121 621h11v11h-11zM154 621h11v11h-11zM264 654h11v11h-11zM22 698h11v11h-11zM264 731h11v11h-11zM165 764h11v11h-11zM264 830h11v11h-11zM176 874h11v11h-11zM264 907h11v11h-11z"/><path fill="#cccccc" d="M11 214h11v11h-11zM154 214h11v11h-11zM165 214h11v11h-11zM22 291h11v11h-11zM11 324h11v11h-11zM220 357h11v11h-11zM209 434h11v11h-11zM198 533h11v11h-11zM132 566h11v11h-11zM176 643h11v11h-11zM165 742h11v11h-11zM176 786h11v11h-11zM121 819h11v11h-11zM165 819h11v11h-11zM143 885h11v11h-11zM11 918h11v11h-11zM22 918h11v11h-11zM121 918h11v11h-11z"/><path fill="#dbdede" d="M110 214h11v11h-11zM220 313h11v11h-11zM253 313h11v11h-11zM22 335h11v11h-11zM121 335h11v11h-11zM187 335h11v11h-11zM209 335h11v11h-11zM198 346h11v11h-11zM11 423h11v11h-11zM253 489h11v11h-11zM22 544h11v11h-11zM143 544h11v11h-11zM22 632h11v11h-11zM253 665h11v11h-11zM11 687h11v11h-11zM121 687h11v11h-11zM209 698h11v11h-11zM220 698h11v11h-11zM121 720h11v11h-11zM132 808h11v11h-11zM253 841h11v11h-11zM187 874h11v11h-11zM143 896h11v11h-11zM264 929h11v9h-11z"/><path fill="#d5d5d5" d="M209 214h11v11h-11zM264 214h11v11h-11zM198 291h11v11h-11zM11 357h11v11h-11zM132 357h11v11h-11zM264 390h11v11h-11zM220 434h11v11h-11zM176 500h11v11h-11zM176 533h11v11h-11zM11 566h11v11h-11zM187 566h11v11h-11zM264 566h11v11h-11zM220 709h11v11h-11zM11 742h11v11h-11zM264 742h11v11h-11zM165 786h11v11h-11zM220 786h11v11h-11zM264 918h11v11h-11z"/><path fill="#e1e4e7" d="M231 214h11v11h-11zM110 236h11v11h-11zM231 247h11v11h-11zM220 302h11v11h-11zM132 346h11v11h-11zM154 368h11v11h-11zM231 390h11v11h-11zM110 412h11v11h-11zM110 423h11v11h-11zM231 423h11v11h-11zM110 456h11v11h-11zM121 522h11v11h-11zM110 544h11v11h-11zM231 566h11v11h-11zM110 588h11v11h-11zM110 599h11v11h-11zM231 599h11v11h-11zM132 687h11v11h-11zM121 698h11v11h-11zM231 742h11v11h-11zM231 775h11v11h-11zM176 808h11v11h-11zM110 841h11v11h-11zM110 863h11v11h-11zM165 874h11v11h-11zM110 896h11v11h-11zM22 907h11v11h-11zM231 918h11v11h-11zM110 929h11v9h-11z"/><path fill="#d5d5d8" d="M11 225h11v11h-11zM11 280h11v11h-11zM11 368h11v11h-11zM165 368h11v11h-11zM220 401h11v11h-11zM132 489h11v11h-11zM132 544h11v11h-11zM110 643h11v11h-11zM132 665h11v11h-11zM22 775h11v11h-11zM143 808h11v11h-11zM121 841h11v11h-11zM187 863h11v11h-11zM121 929h11v9h-11z"/><path fill="#d5d8d8" d="M22 225h11v11h-11zM11 247h11v11h-11zM154 313h11v11h-11zM110 324h11v11h-11zM110 357h11v11h-11zM132 368h11v11h-11zM143 423h11v11h-11zM11 456h11v11h-11zM22 511h11v11h-11zM165 522h11v11h-11zM187 544h11v11h-11zM110 610h11v11h-11zM176 687h11v11h-11zM187 720h11v11h-11zM187 841h11v11h-11z"/><path fill="#d2d5d8" d="M110 225h11v11h-11zM22 247h11v11h-11zM132 247h11v11h-11zM187 665h11v11h-11zM110 753h11v11h-11z"/><path fill="#cccfcf" d="M121 225h11v11h-11zM198 225h11v11h-11zM176 368h11v11h-11zM187 577h11v11h-11zM198 577h11v11h-11zM209 577h11v11h-11zM209 599h11v11h-11zM154 632h11v11h-11zM11 753h11v11h-11zM22 929h11v9h-11z"/><path fill="#cccccf" d="M132 225h11v11h-11zM132 280h11v11h-11zM110 500h11v11h-11zM198 599h11v11h-11zM209 753h11v11h-11zM132 775h11v11h-11zM220 775h11v11h-11z"/><path fill="#c3c6c6" d="M154 225h11v11h-11zM187 225h11v11h-11zM242 247h11v11h-11zM242 423h11v11h-11zM165 577h11v11h-11zM242 599h11v11h-11zM242 775h11v11h-11z"/><path fill="#cfd2d5" d="M176 225h11v11h-11zM253 225h11v11h-11zM187 247h11v11h-11zM132 313h11v11h-11zM165 335h11v11h-11zM253 401h11v11h-11zM253 577h11v11h-11zM187 632h11v11h-11zM209 687h11v11h-11zM253 753h11v11h-11z"/><path fill="#c9cccc" d="M209 225h11v11h-11zM132 401h11v11h-11zM165 401h11v11h-11zM176 423h11v11h-11zM11 577h11v11h-11zM121 632h11v11h-11z"/><path fill="#edf0f3" d="M121 236h11v11h-11zM165 236h11v11h-11zM132 379h11v11h-11zM154 412h11v11h-11zM110 522h11v11h-11zM187 621h11v11h-11z"/><path fill="#f0f0f3" d="M143 236h11v11h-11zM176 236h11v11h-11zM132 412h11v11h-11zM165 588h11v11h-11zM176 588h11v11h-11zM198 588h11v11h-11zM176 621h11v11h-11zM220 632h11v11h-11zM143 731h11v11h-11zM154 896h11v11h-11z"/><path fill="#f0f3f3" d="M154 236h11v11h-11zM187 236h11v11h-11zM242 236h11v11h-11zM242 269h11v11h-11zM187 412h11v11h-11zM242 412h11v11h-11zM220 445h11v11h-11zM242 445h11v11h-11zM242 588h11v11h-11zM132 621h11v11h-11zM242 621h11v11h-11zM132 764h11v11h-11zM154 764h11v11h-11zM187 764h11v11h-11zM209 764h11v11h-11zM242 764h11v11h-11zM242 797h11v11h-11zM198 830h11v11h-11z"/><path fill="#f6f6f9" d="M198 236h11v11h-11zM154 588h11v11h-11zM220 588h11v11h-11zM209 874h11v11h-11z"/><path fill="#f9f9fc" d="M220 236h11v11h-11z"/><path fill="#f3f3f6" d="M264 236h11v11h-11zM264 269h11v11h-11zM209 412h11v11h-11zM220 412h11v11h-11zM264 412h11v11h-11zM264 445h11v11h-11zM209 489h11v11h-11zM264 588h11v11h-11zM264 621h11v11h-11zM264 764h11v11h-11zM132 797h11v11h-11zM264 797h11v11h-11z"/><path fill="#dbdee1" d="M110 247h11v11h-11zM198 247h11v11h-11zM132 302h11v11h-11zM231 335h11v11h-11zM198 511h11v11h-11zM231 511h11v11h-11zM198 665h11v11h-11zM154 687h11v11h-11zM165 687h11v11h-11zM231 687h11v11h-11zM187 698h11v11h-11zM198 863h11v11h-11zM231 863h11v11h-11zM121 874h11v11h-11zM11 929h11v9h-11z"/><path fill="#c3c3c6" d="M121 247h11v11h-11zM132 423h11v11h-11zM176 775h11v11h-11z"/><path fill="#bababd" d="M143 247h11v11h-11z"/><path fill="#c9c9cc" d="M154 247h11v11h-11zM253 247h11v11h-11zM253 423h11v11h-11zM253 599h11v11h-11zM143 753h11v11h-11zM253 775h11v11h-11z"/><path fill="#b4b7b7" d="M165 247h11v11h-11z"/><path fill="#d2d2d5" d="M264 247h11v11h-11zM154 335h11v11h-11zM198 401h11v11h-11zM264 423h11v11h-11zM110 434h11v11h-11zM154 456h11v11h-11zM220 456h11v11h-11zM176 489h11v11h-11zM264 599h11v11h-11zM165 665h11v11h-11zM110 709h11v11h-11zM11 720h11v11h-11zM165 753h11v11h-11zM187 775h11v11h-11zM209 775h11v11h-11zM264 775h11v11h-11zM154 808h11v11h-11zM11 863h11v11h-11z"/><path fill="#cfcfcf" d="M143 258h11v11h-11zM187 291h11v11h-11zM121 324h11v11h-11zM176 324h11v11h-11zM22 390h11v11h-11zM143 390h11v11h-11zM165 390h11v11h-11zM11 467h11v11h-11zM121 467h11v11h-11zM220 500h11v11h-11zM143 566h11v11h-11zM22 610h11v11h-11zM154 610h11v11h-11zM176 610h11v11h-11zM154 643h11v11h-11zM187 676h11v11h-11zM198 709h11v11h-11zM198 786h11v11h-11zM209 786h11v11h-11zM22 819h11v11h-11z"/><path fill="#eaeaea" d="M176 258h11v11h-11z"/><path fill="#e4e7ea" d="M11 269h11v11h-11zM110 280h11v11h-11zM231 280h11v11h-11zM253 302h11v11h-11zM110 335h11v11h-11zM176 335h11v11h-11zM11 346h11v11h-11zM121 412h11v11h-11zM187 423h11v11h-11zM231 456h11v11h-11zM253 478h11v11h-11zM110 489h11v11h-11zM11 555h11v11h-11zM143 588h11v11h-11zM231 632h11v11h-11zM110 654h11v11h-11zM143 654h11v11h-11zM253 654h11v11h-11zM110 731h11v11h-11zM231 808h11v11h-11zM132 830h11v11h-11zM187 830h11v11h-11zM253 830h11v11h-11zM176 863h11v11h-11z"/><path fill="#eaedf0" d="M110 269h11v11h-11zM110 346h11v11h-11zM220 379h11v11h-11zM110 445h11v11h-11zM143 478h11v11h-11zM110 555h11v11h-11zM110 621h11v11h-11zM143 621h11v11h-11zM110 698h11v11h-11zM121 731h11v11h-11zM110 764h11v11h-11zM110 797h11v11h-11zM121 797h11v11h-11zM143 907h11v11h-11zM143 929h11v9h-11z"/><path fill="#eaeaed" d="M143 302h11v11h-11zM143 346h11v11h-11zM264 346h11v11h-11zM121 379h11v11h-11zM187 379h11v11h-11zM209 379h11v11h-11zM165 412h11v11h-11zM132 445h11v11h-11zM187 522h11v11h-11zM264 522h11v11h-11zM143 555h11v11h-11zM209 588h11v11h-11zM165 621h11v11h-11zM121 654h11v11h-11zM176 665h11v11h-11zM264 698h11v11h-11zM11 808h11v11h-11zM165 830h11v11h-11zM198 841h11v11h-11zM11 874h11v11h-11zM264 874h11v11h-11z"/><path fill="#e4e4e7" d="M154 302h11v11h-11zM209 302h11v11h-11zM11 313h11v11h-11zM143 335h11v11h-11zM176 478h11v11h-11zM187 489h11v11h-11zM187 511h11v11h-11zM22 522h11v11h-11zM209 522h11v11h-11zM143 720h11v11h-11zM154 731h11v11h-11zM22 830h11v11h-11zM165 863h11v11h-11z"/><path fill="#e1e1e4" d="M176 302h11v11h-11zM198 313h11v11h-11zM209 346h11v11h-11zM220 368h11v11h-11zM11 412h11v11h-11zM154 511h11v11h-11zM209 511h11v11h-11zM220 511h11v11h-11zM132 522h11v11h-11zM154 555h11v11h-11zM22 588h11v11h-11zM11 665h11v11h-11zM187 687h11v11h-11zM110 742h11v11h-11zM11 830h11v11h-11zM121 830h11v11h-11zM22 841h11v11h-11zM143 841h11v11h-11zM132 863h11v11h-11z"/><path fill="#dee1e4" d="M242 346h11v11h-11zM110 368h11v11h-11zM143 456h11v11h-11zM165 456h11v11h-11zM121 489h11v11h-11zM110 511h11v11h-11zM143 511h11v11h-11zM242 522h11v11h-11zM110 577h11v11h-11zM110 632h11v11h-11zM242 698h11v11h-11zM220 731h11v11h-11zM132 874h11v11h-11zM242 874h11v11h-11z"/><path fill="#d8d8d8" d="M176 357h11v11h-11zM209 390h11v11h-11zM154 819h11v11h-11z"/><path fill="#cccfd2" d="M22 368h11v11h-11zM209 368h11v11h-11zM22 401h11v11h-11zM132 753h11v11h-11z"/><path fill="#c9cccf" d="M187 368h11v11h-11zM176 456h11v11h-11zM209 456h11v11h-11zM22 753h11v11h-11zM121 753h11v11h-11z"/><path fill="#e1e1e1" d="M11 390h11v11h-11zM209 566h11v11h-11z"/><path fill="#c0c3c6" d="M154 401h11v11h-11z"/><path fill="#c0c3c3" d="M209 401h11v11h-11z"/><path fill="#f6f9f9" d="M143 412h11v11h-11zM220 764h11v11h-11zM209 797h11v11h-11z"/><path fill="#f3f6f6" d="M198 412h11v11h-11zM143 445h11v11h-11zM187 445h11v11h-11zM209 478h11v11h-11zM176 764h11v11h-11zM154 797h11v11h-11zM176 797h11v11h-11z"/><path fill="#c6c6c9" d="M121 423h11v11h-11zM198 456h11v11h-11zM176 577h11v11h-11zM165 775h11v11h-11zM165 808h11v11h-11z"/><path fill="#b7b7ba" d="M154 423h11v11h-11z"/><path fill="#c6c9cc" d="M132 456h11v11h-11zM143 577h11v11h-11z"/><path fill="#f0f0f0" d="M176 467h11v11h-11zM187 610h11v11h-11zM187 643h11v11h-11zM165 885h11v11h-11z"/><path fill="#ababab" d="M132 500h11v11h-11z"/><path fill="#b4b4b4" d="M121 533h11v11h-11zM121 566h11v11h-11zM187 786h11v11h-11z"/><path fill="#e4e4e4" d="M220 533h11v11h-11z"/><path fill="#c6c9c9" d="M121 599h11v11h-11z"/><path fill="#babdbd" d="M132 599h11v11h-11zM154 599h11v11h-11zM143 775h11v11h-11z"/><path fill="#b4b4b7" d="M143 599h11v11h-11z"/><path fill="#bdbdc0" d="M176 599h11v11h-11z"/><path fill="#b7baba" d="M187 599h11v11h-11z"/><path fill="#f3f6f9" d="M220 621h11v11h-11zM209 863h11v11h-11zM154 907h11v11h-11z"/><path fill="#dbe1e4" d="M110 687h11v11h-11zM110 808h11v11h-11z"/><path fill="#c0c0c3" d="M187 753h11v11h-11z"/><path fill="#e1e7ea" d="M110 775h11v11h-11z"/><path fill="#bdc0c0" d="M198 775h11v11h-11z"/><path fill="#c3c6c9" d="M121 808h11v11h-11z"/><path fill="#e1e7e7" d="M110 907h11v11h-11z"/><path fill="#f9ffff" d="M33 929h11v9h-11zM44 929h11v9h-11zM55 929h11v9h-11zM66 929h11v9h-11zM77 929h11v9h-11zM88 929h11v9h-11zM99 929h11v9h-11zM154 929h11v9h-11zM165 929h11v9h-11zM176 929h11v9h-11zM187 929h11v9h-11zM198 929h11v9h-11zM209 929h11v9h-11zM220 929h11v9h-11zM275 929h11v9h-11zM286 929h11v9h-11zM297 929h11v9h-11zM308 929h11v9h-11zM319 929h11v9h-11zM330 929h11v9h-11zM341 929h11v9h-11zM352 929h11v9h-11zM363 929h11v9h-11zM374 929h11v9h-11zM385 929h6v9h-6z"/></svg>
<div style="position:absolute;left:932px;top:94px;width:534px;height:844px;background:#f0f0f0;"></div>
<div style="position:absolute;left:932px;top:94px;width:534px;height:1px;background:#fff;"></div>
<div style="position:absolute;left:932px;top:94px;width:1px;height:844px;background:#fff;"></div>
<div style="position:absolute;left:933px;top:95px;width:533px;height:1px;background:#e3e3e3;"></div>
<div style="position:absolute;left:933px;top:95px;width:1px;height:843px;background:#e3e3e3;"></div>
<div style="position:absolute;left:935px;top:77px;width:38px;height:18px;background:#f0f0f0;"></div>
<div style="position:absolute;left:935px;top:77px;width:37px;height:1px;background:#fff;"></div>
<div style="position:absolute;left:935px;top:77px;width:1px;height:18px;background:#fff;"></div>
<div style="position:absolute;left:971px;top:78px;width:1px;height:17px;background:#a0a0a0;"></div>
<div style="position:absolute;left:972px;top:78px;width:1px;height:17px;background:#696969;"></div>
<div style="position:absolute;left:973px;top:77px;width:104px;height:18px;background:#f0f0f0;"></div>
<div style="position:absolute;left:973px;top:77px;width:103px;height:1px;background:#fff;"></div>
<div style="position:absolute;left:973px;top:77px;width:1px;height:18px;background:#fff;"></div>
<div style="position:absolute;left:1075px;top:78px;width:1px;height:17px;background:#a0a0a0;"></div>
<div style="position:absolute;left:1076px;top:78px;width:1px;height:17px;background:#696969;"></div>
<div style="position:absolute;left:1140px;top:77px;width:37px;height:18px;background:#f0f0f0;"></div>
<div style="position:absolute;left:1140px;top:77px;width:36px;height:1px;background:#fff;"></div>
<div style="position:absolute;left:1140px;top:77px;width:1px;height:18px;background:#fff;"></div>
<div style="position:absolute;left:1175px;top:78px;width:1px;height:17px;background:#a0a0a0;"></div>
<div style="position:absolute;left:1176px;top:78px;width:1px;height:17px;background:#696969;"></div>
<div style="position:absolute;left:1177px;top:77px;width:46px;height:18px;background:#f0f0f0;"></div>
<div style="position:absolute;left:1177px;top:77px;width:45px;height:1px;background:#fff;"></div>
<div style="position:absolute;left:1177px;top:77px;width:1px;height:18px;background:#fff;"></div>
<div style="position:absolute;left:1221px;top:78px;width:1px;height:17px;background:#a0a0a0;"></div>
<div style="position:absolute;left:1222px;top:78px;width:1px;height:17px;background:#696969;"></div>
<div style="position:absolute;left:1076px;top:75px;width:64px;height:20px;background:#f0f0f0;"></div>
<div style="position:absolute;left:1076px;top:75px;width:63px;height:1px;background:#fff;"></div>
<div style="position:absolute;left:1076px;top:75px;width:1px;height:20px;background:#fff;"></div>
<div style="position:absolute;left:1138px;top:76px;width:1px;height:19px;background:#a0a0a0;"></div>
<div style="position:absolute;left:1139px;top:76px;width:1px;height:19px;background:#696969;"></div>
<div style="position:absolute;left:1077px;top:94px;width:61px;height:2px;background:#f0f0f0;"></div>
<div style="position:absolute;left:940.5px;top:80.69px;font-size:11px;line-height:11px;color:#000;font-weight:normal;white-space:nowrap;letter-spacing:-0.25px;">Menu</div>
<div style="position:absolute;left:979px;top:80.69px;font-size:11px;line-height:11px;color:#000;font-weight:normal;white-space:nowrap;letter-spacing:-0.25px;">Gebruikers in groep</div>
<div style="position:absolute;left:1083px;top:78.69px;font-size:11px;line-height:11px;color:#000;font-weight:normal;white-space:nowrap;letter-spacing:-0.25px;">Autorisatie</div>
<div style="position:absolute;left:1144.5px;top:80.69px;font-size:11px;line-height:11px;color:#000;font-weight:normal;white-space:nowrap;letter-spacing:-0.25px;">InSite</div>
<div style="position:absolute;left:1184px;top:80.69px;font-size:11px;line-height:11px;color:#000;font-weight:normal;white-space:nowrap;letter-spacing:-0.25px;">Pocket</div>
<div style="position:absolute;left:939.5px;top:102.69px;font-size:11px;line-height:11px;color:#000;font-weight:normal;white-space:nowrap;letter-spacing:-0.17px;">Selecteer een onderdeel uit de lijst en geef het autorisatieniveau aan voor de geselecteerde groep of gebruiker.</div>
<div style="position:absolute;left:936px;top:133px;width:530px;height:805px;background:#fff;"></div>
<div style="position:absolute;left:936px;top:133px;width:530px;height:1px;background:#a0a0a0;"></div>
<div style="position:absolute;left:936px;top:133px;width:1px;height:805px;background:#a0a0a0;"></div>
<div style="position:absolute;left:937px;top:134px;width:529px;height:1px;background:#696969;"></div>
<div style="position:absolute;left:937px;top:134px;width:1px;height:804px;background:#696969;"></div>
<div style="position:absolute;left:1071px;top:743px;width:87px;height:16px;background:#e8e8e8;"></div>
<svg style="position:absolute;left:938px;top:135px" width="528" height="803" viewBox="938 135 528 803"><path d="M946.5 143V159" stroke="#808080" stroke-width="1" stroke-dasharray="1 1"/><path d="M947 143.5H957" stroke="#808080" stroke-width="1" stroke-dasharray="1 1"/><path d="M946.5 159V175" stroke="#808080" stroke-width="1" stroke-dasharray="1 1"/><path d="M947 159.5H957" stroke="#808080" stroke-width="1" stroke-dasharray="1 1"/><path d="M946.5 175V940" stroke="#808080" stroke-width="1" stroke-dasharray="1 1"/><path d="M947 175.5H957" stroke="#808080" stroke-width="1" stroke-dasharray="1 1"/><path d="M965.5 191V940" stroke="#808080" stroke-width="1" stroke-dasharray="1 1"/><path d="M965.5 183V191" stroke="#808080" stroke-width="1" stroke-dasharray="1 1"/><path d="M966 191.5H976" stroke="#808080" stroke-width="1" stroke-dasharray="1 1"/><path d="M984.5 207V940" stroke="#808080" stroke-width="1" stroke-dasharray="1 1"/><path d="M984.5 199V207" stroke="#808080" stroke-width="1" stroke-dasharray="1 1"/><path d="M985 207.5H995" stroke="#808080" stroke-width="1" stroke-dasharray="1 1"/><path d="M1003.5 223V239" stroke="#808080" stroke-width="1" stroke-dasharray="1 1"/><path d="M1003.5 215V223" stroke="#808080" stroke-width="1" stroke-dasharray="1 1"/><path d="M1004 223.5H1014" stroke="#808080" stroke-width="1" stroke-dasharray="1 1"/><path d="M1003.5 239V255" stroke="#808080" stroke-width="1" stroke-dasharray="1 1"/><path d="M1004 239.5H1014" stroke="#808080" stroke-width="1" stroke-dasharray="1 1"/><path d="M1003.5 255V271" stroke="#808080" stroke-width="1" stroke-dasharray="1 1"/><path d="M1004 255.5H1014" stroke="#808080" stroke-width="1" stroke-dasharray="1 1"/><path d="M1003.5 271V287" stroke="#808080" stroke-width="1" stroke-dasharray="1 1"/><path d="M1004 271.5H1014" stroke="#808080" stroke-width="1" stroke-dasharray="1 1"/><path d="M1003.5 287V303" stroke="#808080" stroke-width="1" stroke-dasharray="1 1"/><path d="M1004 287.5H1014" stroke="#808080" stroke-width="1" stroke-dasharray="1 1"/><path d="M1003.5 303V319" stroke="#808080" stroke-width="1" stroke-dasharray="1 1"/><path d="M1004 303.5H1014" stroke="#808080" stroke-width="1" stroke-dasharray="1 1"/><path d="M1003.5 319V335" stroke="#808080" stroke-width="1" stroke-dasharray="1 1"/><path d="M1004 319.5H1014" stroke="#808080" stroke-width="1" stroke-dasharray="1 1"/><path d="M1003.5 335V351" stroke="#808080" stroke-width="1" stroke-dasharray="1 1"/><path d="M1004 335.5H1014" stroke="#808080" stroke-width="1" stroke-dasharray="1 1"/><path d="M1003.5 351V367" stroke="#808080" stroke-width="1" stroke-dasharray="1 1"/><path d="M1004 351.5H1014" stroke="#808080" stroke-width="1" stroke-dasharray="1 1"/><path d="M1003.5 367V383" stroke="#808080" stroke-width="1" stroke-dasharray="1 1"/><path d="M1004 367.5H1014" stroke="#808080" stroke-width="1" stroke-dasharray="1 1"/><path d="M1003.5 383V399" stroke="#808080" stroke-width="1" stroke-dasharray="1 1"/><path d="M1004 383.5H1014" stroke="#808080" stroke-width="1" stroke-dasharray="1 1"/><path d="M1003.5 399V415" stroke="#808080" stroke-width="1" stroke-dasharray="1 1"/><path d="M1004 399.5H1014" stroke="#808080" stroke-width="1" stroke-dasharray="1 1"/><path d="M1003.5 415V431" stroke="#808080" stroke-width="1" stroke-dasharray="1 1"/><path d="M1004 415.5H1014" stroke="#808080" stroke-width="1" stroke-dasharray="1 1"/><path d="M1003.5 431V447" stroke="#808080" stroke-width="1" stroke-dasharray="1 1"/><path d="M1004 431.5H1014" stroke="#808080" stroke-width="1" stroke-dasharray="1 1"/><path d="M1003.5 447V463" stroke="#808080" stroke-width="1" stroke-dasharray="1 1"/><path d="M1004 447.5H1014" stroke="#808080" stroke-width="1" stroke-dasharray="1 1"/><path d="M1003.5 463V479" stroke="#808080" stroke-width="1" stroke-dasharray="1 1"/><path d="M1004 463.5H1014" stroke="#808080" stroke-width="1" stroke-dasharray="1 1"/><path d="M1003.5 479V495" stroke="#808080" stroke-width="1" stroke-dasharray="1 1"/><path d="M1004 479.5H1014" stroke="#808080" stroke-width="1" stroke-dasharray="1 1"/><path d="M1003.5 495V511" stroke="#808080" stroke-width="1" stroke-dasharray="1 1"/><path d="M1004 495.5H1014" stroke="#808080" stroke-width="1" stroke-dasharray="1 1"/><path d="M1003.5 511V527" stroke="#808080" stroke-width="1" stroke-dasharray="1 1"/><path d="M1004 511.5H1014" stroke="#808080" stroke-width="1" stroke-dasharray="1 1"/><path d="M1003.5 527V543" stroke="#808080" stroke-width="1" stroke-dasharray="1 1"/><path d="M1004 527.5H1014" stroke="#808080" stroke-width="1" stroke-dasharray="1 1"/><path d="M1003.5 543V559" stroke="#808080" stroke-width="1" stroke-dasharray="1 1"/><path d="M1004 543.5H1014" stroke="#808080" stroke-width="1" stroke-dasharray="1 1"/><path d="M1003.5 559V575" stroke="#808080" stroke-width="1" stroke-dasharray="1 1"/><path d="M1004 559.5H1014" stroke="#808080" stroke-width="1" stroke-dasharray="1 1"/><path d="M1003.5 575V591" stroke="#808080" stroke-width="1" stroke-dasharray="1 1"/><path d="M1004 575.5H1014" stroke="#808080" stroke-width="1" stroke-dasharray="1 1"/><path d="M1003.5 591V607" stroke="#808080" stroke-width="1" stroke-dasharray="1 1"/><path d="M1004 591.5H1014" stroke="#808080" stroke-width="1" stroke-dasharray="1 1"/><path d="M1003.5 607V623" stroke="#808080" stroke-width="1" stroke-dasharray="1 1"/><path d="M1004 607.5H1014" stroke="#808080" stroke-width="1" stroke-dasharray="1 1"/><path d="M1003.5 623V639" stroke="#808080" stroke-width="1" stroke-dasharray="1 1"/><path d="M1004 623.5H1014" stroke="#808080" stroke-width="1" stroke-dasharray="1 1"/><path d="M1003.5 639V655" stroke="#808080" stroke-width="1" stroke-dasharray="1 1"/><path d="M1004 639.5H1014" stroke="#808080" stroke-width="1" stroke-dasharray="1 1"/><path d="M1003.5 655V671" stroke="#808080" stroke-width="1" stroke-dasharray="1 1"/><path d="M1004 655.5H1014" stroke="#808080" stroke-width="1" stroke-dasharray="1 1"/><path d="M1003.5 671V687" stroke="#808080" stroke-width="1" stroke-dasharray="1 1"/><path d="M1004 671.5H1014" stroke="#808080" stroke-width="1" stroke-dasharray="1 1"/><path d="M1003.5 687V703" stroke="#808080" stroke-width="1" stroke-dasharray="1 1"/><path d="M1004 687.5H1014" stroke="#808080" stroke-width="1" stroke-dasharray="1 1"/><path d="M1003.5 703V719" stroke="#808080" stroke-width="1" stroke-dasharray="1 1"/><path d="M1004 703.5H1014" stroke="#808080" stroke-width="1" stroke-dasharray="1 1"/><path d="M1004 719.5H1014" stroke="#808080" stroke-width="1" stroke-dasharray="1 1"/><path d="M1022.5 727V735" stroke="#808080" stroke-width="1" stroke-dasharray="1 1"/><path d="M1023 735.5H1033" stroke="#808080" stroke-width="1" stroke-dasharray="1 1"/><path d="M1041.5 751V767" stroke="#808080" stroke-width="1" stroke-dasharray="1 1"/><path d="M1041.5 743V751" stroke="#808080" stroke-width="1" stroke-dasharray="1 1"/><path d="M1042 751.5H1052" stroke="#808080" stroke-width="1" stroke-dasharray="1 1"/><path d="M1041.5 767V783" stroke="#808080" stroke-width="1" stroke-dasharray="1 1"/><path d="M1042 767.5H1052" stroke="#808080" stroke-width="1" stroke-dasharray="1 1"/><path d="M1041.5 783V799" stroke="#808080" stroke-width="1" stroke-dasharray="1 1"/><path d="M1042 783.5H1052" stroke="#808080" stroke-width="1" stroke-dasharray="1 1"/><path d="M1041.5 799V815" stroke="#808080" stroke-width="1" stroke-dasharray="1 1"/><path d="M1042 799.5H1052" stroke="#808080" stroke-width="1" stroke-dasharray="1 1"/><path d="M1041.5 815V831" stroke="#808080" stroke-width="1" stroke-dasharray="1 1"/><path d="M1042 815.5H1052" stroke="#808080" stroke-width="1" stroke-dasharray="1 1"/><path d="M1041.5 831V847" stroke="#808080" stroke-width="1" stroke-dasharray="1 1"/><path d="M1042 831.5H1052" stroke="#808080" stroke-width="1" stroke-dasharray="1 1"/><path d="M1041.5 847V863" stroke="#808080" stroke-width="1" stroke-dasharray="1 1"/><path d="M1042 847.5H1052" stroke="#808080" stroke-width="1" stroke-dasharray="1 1"/><path d="M1041.5 863V879" stroke="#808080" stroke-width="1" stroke-dasharray="1 1"/><path d="M1042 863.5H1052" stroke="#808080" stroke-width="1" stroke-dasharray="1 1"/><path d="M1041.5 879V895" stroke="#808080" stroke-width="1" stroke-dasharray="1 1"/><path d="M1042 879.5H1052" stroke="#808080" stroke-width="1" stroke-dasharray="1 1"/><path d="M1041.5 895V911" stroke="#808080" stroke-width="1" stroke-dasharray="1 1"/><path d="M1042 895.5H1052" stroke="#808080" stroke-width="1" stroke-dasharray="1 1"/><path d="M1041.5 911V927" stroke="#808080" stroke-width="1" stroke-dasharray="1 1"/><path d="M1042 911.5H1052" stroke="#808080" stroke-width="1" stroke-dasharray="1 1"/><path d="M1042 927.5H1052" stroke="#808080" stroke-width="1" stroke-dasharray="1 1"/><path d="M985 943.5H995" stroke="#808080" stroke-width="1" stroke-dasharray="1 1"/><use href="#plus" x="942" y="139" width="9" height="9"/><use href="#gear" x="957" y="135" width="16" height="16"/><use href="#plus" x="942" y="155" width="9" height="9"/><use href="#gear" x="957" y="151" width="16" height="16"/><use href="#minus" x="942" y="171" width="9" height="9"/><use href="#gear" x="957" y="167" width="16" height="16"/><use href="#minus" x="961" y="187" width="9" height="9"/><use href="#fold" x="976" y="183" width="16" height="16"/><use href="#minus" x="980" y="203" width="9" height="9"/><use href="#fold" x="995" y="199" width="16" height="16"/><use href="#plus" x="999" y="219" width="9" height="9"/><use href="#fold" x="1014" y="215" width="16" height="16"/><use href="#plus" x="999" y="235" width="9" height="9"/><use href="#fold" x="1014" y="231" width="16" height="16"/><use href="#plus" x="999" y="251" width="9" height="9"/><use href="#fold" x="1014" y="247" width="16" height="16"/><use href="#plus" x="999" y="267" width="9" height="9"/><use href="#fold" x="1014" y="263" width="16" height="16"/><use href="#plus" x="999" y="283" width="9" height="9"/><use href="#fold" x="1014" y="279" width="16" height="16"/><use href="#plus" x="999" y="299" width="9" height="9"/><use href="#fold" x="1014" y="295" width="16" height="16"/><use href="#plus" x="999" y="315" width="9" height="9"/><use href="#fold" x="1014" y="311" width="16" height="16"/><use href="#plus" x="999" y="331" width="9" height="9"/><use href="#fold" x="1014" y="327" width="16" height="16"/><use href="#plus" x="999" y="347" width="9" height="9"/><use href="#fold" x="1014" y="343" width="16" height="16"/><use href="#plus" x="999" y="363" width="9" height="9"/><use href="#fold" x="1014" y="359" width="16" height="16"/><use href="#plus" x="999" y="379" width="9" height="9"/><use href="#fold" x="1014" y="375" width="16" height="16"/><use href="#plus" x="999" y="395" width="9" height="9"/><use href="#fold" x="1014" y="391" width="16" height="16"/><use href="#plus" x="999" y="411" width="9" height="9"/><use href="#fold" x="1014" y="407" width="16" height="16"/><use href="#plus" x="999" y="427" width="9" height="9"/><use href="#fold" x="1014" y="423" width="16" height="16"/><use href="#plus" x="999" y="443" width="9" height="9"/><use href="#fold" x="1014" y="439" width="16" height="16"/><use href="#plus" x="999" y="459" width="9" height="9"/><use href="#fold" x="1014" y="455" width="16" height="16"/><use href="#plus" x="999" y="475" width="9" height="9"/><use href="#fold" x="1014" y="471" width="16" height="16"/><use href="#plus" x="999" y="491" width="9" height="9"/><use href="#fold" x="1014" y="487" width="16" height="16"/><use href="#plus" x="999" y="507" width="9" height="9"/><use href="#fold" x="1014" y="503" width="16" height="16"/><use href="#plus" x="999" y="523" width="9" height="9"/><use href="#fold" x="1014" y="519" width="16" height="16"/><use href="#plus" x="999" y="539" width="9" height="9"/><use href="#fold" x="1014" y="535" width="16" height="16"/><use href="#plus" x="999" y="555" width="9" height="9"/><use href="#fold" x="1014" y="551" width="16" height="16"/><use href="#plus" x="999" y="571" width="9" height="9"/><use href="#fold" x="1014" y="567" width="16" height="16"/><use href="#plus" x="999" y="587" width="9" height="9"/><use href="#fold" x="1014" y="583" width="16" height="16"/><use href="#plus" x="999" y="603" width="9" height="9"/><use href="#fold" x="1014" y="599" width="16" height="16"/><use href="#plus" x="999" y="619" width="9" height="9"/><use href="#fold" x="1014" y="615" width="16" height="16"/><use href="#plus" x="999" y="635" width="9" height="9"/><use href="#fold" x="1014" y="631" width="16" height="16"/><use href="#plus" x="999" y="651" width="9" height="9"/><use href="#fold" x="1014" y="647" width="16" height="16"/><use href="#plus" x="999" y="667" width="9" height="9"/><use href="#fold" x="1014" y="663" width="16" height="16"/><use href="#plus" x="999" y="683" width="9" height="9"/><use href="#foldg" x="1014" y="679" width="16" height="16"/><use href="#plus" x="999" y="699" width="9" height="9"/><use href="#foldg" x="1014" y="695" width="16" height="16"/><use href="#minus" x="999" y="715" width="9" height="9"/><use href="#foldg" x="1014" y="711" width="16" height="16"/><use href="#minus" x="1018" y="731" width="9" height="9"/><use href="#fold" x="1033" y="727" width="16" height="16"/><use href="#filt" x="1052" y="743" width="16" height="16"/><use href="#filt" x="1052" y="759" width="16" height="16"/><use href="#filt" x="1052" y="775" width="16" height="16"/><use href="#filt" x="1052" y="791" width="16" height="16"/><use href="#filt" x="1052" y="807" width="16" height="16"/><use href="#filt" x="1052" y="823" width="16" height="16"/><use href="#filt" x="1052" y="839" width="16" height="16"/><use href="#filt" x="1052" y="855" width="16" height="16"/><use href="#filt" x="1052" y="871" width="16" height="16"/><use href="#filt" x="1052" y="887" width="16" height="16"/><use href="#filt" x="1052" y="903" width="16" height="16"/><use href="#filt" x="1052" y="919" width="16" height="16"/><use href="#plus" x="980" y="939" width="9" height="9"/><use href="#fold" x="995" y="935" width="16" height="16"/><path d="M1398.5 607.5L1176 737" stroke="#e8202a" stroke-width="2.2"/><path d="M1165.5 744.5L1173.5 731L1182 743.5z" fill="#e8202a"/></svg>
<div style="position:absolute;left:978px;top:137.69px;font-size:11px;line-height:11px;color:#000;font-weight:normal;white-space:nowrap;letter-spacing:-0.25px;">Algemeen</div>
<div style="position:absolute;left:978px;top:153.69px;font-size:11px;line-height:11px;color:#000;font-weight:normal;white-space:nowrap;letter-spacing:-0.25px;">CRM</div>
<div style="position:absolute;left:978px;top:169.69px;font-size:11px;line-height:11px;color:#000;font-weight:normal;white-space:nowrap;letter-spacing:-0.25px;">HRM</div>
<div style="position:absolute;left:997px;top:185.69px;font-size:11px;line-height:11px;color:#000;font-weight:normal;white-space:nowrap;letter-spacing:-0.25px;">Medewerker</div>
<div style="position:absolute;left:1016px;top:201.69px;font-size:11px;line-height:11px;color:#000;font-weight:normal;white-space:nowrap;letter-spacing:-0.25px;">Medewerker (MSS)</div>
<div style="position:absolute;left:1035px;top:217.69px;font-size:11px;line-height:11px;color:#000;font-weight:normal;white-space:nowrap;letter-spacing:-0.25px;">Auto</div>
<div style="position:absolute;left:1035px;top:233.69px;font-size:11px;line-height:11px;color:#000;font-weight:normal;white-space:nowrap;letter-spacing:-0.25px;">Autorisatierol</div>
<div style="position:absolute;left:1035px;top:249.69px;font-size:11px;line-height:11px;color:#000;font-weight:normal;white-space:nowrap;letter-spacing:-0.25px;">Bank</div>
<div style="position:absolute;left:1035px;top:265.69px;font-size:11px;line-height:11px;color:#000;font-weight:normal;white-space:nowrap;letter-spacing:-0.25px;">Beoordeling</div>
<div style="position:absolute;left:1035px;top:281.69px;font-size:11px;line-height:11px;color:#000;font-weight:normal;white-space:nowrap;letter-spacing:-0.25px;">Betaling</div>
<div style="position:absolute;left:1035px;top:297.69px;font-size:11px;line-height:11px;color:#000;font-weight:normal;white-space:nowrap;letter-spacing:-0.25px;">Contract</div>
<div style="position:absolute;left:1035px;top:313.69px;font-size:11px;line-height:11px;color:#000;font-weight:normal;white-space:nowrap;letter-spacing:-0.25px;">Cursus</div>
<div style="position:absolute;left:1035px;top:329.69px;font-size:11px;line-height:11px;color:#000;font-weight:normal;white-space:nowrap;letter-spacing:-0.25px;">Familie</div>
<div style="position:absolute;left:1035px;top:345.69px;font-size:11px;line-height:11px;color:#000;font-weight:normal;white-space:nowrap;letter-spacing:-0.25px;">Functie</div>
<div style="position:absolute;left:1035px;top:361.69px;font-size:11px;line-height:11px;color:#000;font-weight:normal;white-space:nowrap;letter-spacing:-0.25px;">Instantie</div>
<div style="position:absolute;left:1035px;top:377.69px;font-size:11px;line-height:11px;color:#000;font-weight:normal;white-space:nowrap;letter-spacing:-0.25px;">Keuring</div>
<div style="position:absolute;left:1035px;top:393.69px;font-size:11px;line-height:11px;color:#000;font-weight:normal;white-space:nowrap;letter-spacing:-0.25px;">Keuzemodel</div>
<div style="position:absolute;left:1035px;top:409.69px;font-size:11px;line-height:11px;color:#000;font-weight:normal;white-space:nowrap;letter-spacing:-0.25px;">Lening</div>
<div style="position:absolute;left:1035px;top:425.69px;font-size:11px;line-height:11px;color:#000;font-weight:normal;white-space:nowrap;letter-spacing:-0.25px;">Loonbeslag</div>
<div style="position:absolute;left:1035px;top:441.69px;font-size:11px;line-height:11px;color:#000;font-weight:normal;white-space:nowrap;letter-spacing:-0.25px;">Loopbaanhistorie</div>
<div style="position:absolute;left:1035px;top:457.69px;font-size:11px;line-height:11px;color:#000;font-weight:normal;white-space:nowrap;letter-spacing:-0.25px;">Opleiding</div>
<div style="position:absolute;left:1035px;top:473.69px;font-size:11px;line-height:11px;color:#000;font-weight:normal;white-space:nowrap;letter-spacing:-0.25px;">Rol</div>
<div style="position:absolute;left:1035px;top:489.69px;font-size:11px;line-height:11px;color:#000;font-weight:normal;white-space:nowrap;letter-spacing:-0.25px;">Rooster</div>
<div style="position:absolute;left:1035px;top:505.69px;font-size:11px;line-height:11px;color:#000;font-weight:normal;white-space:nowrap;letter-spacing:-0.25px;">Salaris</div>
<div style="position:absolute;left:1035px;top:521.69px;font-size:11px;line-height:11px;color:#000;font-weight:normal;white-space:nowrap;letter-spacing:-0.25px;">Thuiswerkdagen</div>
<div style="position:absolute;left:1035px;top:537.69px;font-size:11px;line-height:11px;color:#000;font-weight:normal;white-space:nowrap;letter-spacing:-0.25px;">Verlof</div>
<div style="position:absolute;left:1035px;top:553.69px;font-size:11px;line-height:11px;color:#000;font-weight:normal;white-space:nowrap;letter-spacing:-0.25px;">Verlofcorrectie</div>
<div style="position:absolute;left:1035px;top:569.69px;font-size:11px;line-height:11px;color:#000;font-weight:normal;white-space:nowrap;letter-spacing:-0.25px;">Verlofsaldo</div>
<div style="position:absolute;left:1035px;top:585.69px;font-size:11px;line-height:11px;color:#000;font-weight:normal;white-space:nowrap;letter-spacing:-0.25px;">Verzuim</div>
<div style="position:absolute;left:1035px;top:601.69px;font-size:11px;line-height:11px;color:#000;font-weight:normal;white-space:nowrap;letter-spacing:-0.25px;">Voorschot</div>
<div style="position:absolute;left:1035px;top:617.69px;font-size:11px;line-height:11px;color:#000;font-weight:normal;white-space:nowrap;letter-spacing:-0.25px;">Identiteitsbewijs</div>
<div style="position:absolute;left:1035px;top:633.69px;font-size:11px;line-height:11px;color:#000;font-weight:normal;white-space:nowrap;letter-spacing:-0.25px;">Verklaring omtrent gedrag</div>
<div style="position:absolute;left:1035px;top:649.69px;font-size:11px;line-height:11px;color:#000;font-weight:normal;white-space:nowrap;letter-spacing:-0.25px;">Ouderschapsverlof overeenkomst</div>
<div style="position:absolute;left:1035px;top:665.69px;font-size:11px;line-height:11px;color:#000;font-weight:normal;white-space:nowrap;letter-spacing:-0.25px;">Ouderverlof saldo</div>
<div style="position:absolute;left:1035px;top:681.69px;font-size:11px;line-height:11px;color:#000;font-weight:normal;white-space:nowrap;letter-spacing:-0.25px;">Tabbladen</div>
<div style="position:absolute;left:1035px;top:697.69px;font-size:11px;line-height:11px;color:#000;font-weight:normal;white-space:nowrap;letter-spacing:-0.25px;">Acties</div>
<div style="position:absolute;left:1035px;top:713.69px;font-size:11px;line-height:11px;color:#000;font-weight:normal;white-space:nowrap;letter-spacing:-0.25px;">Filters</div>
<div style="position:absolute;left:1054px;top:729.69px;font-size:11px;line-height:11px;color:#000;font-weight:normal;white-space:nowrap;letter-spacing:-0.25px;">HRM-medewerkers</div>
<div style="position:absolute;left:1073px;top:745.69px;font-size:11px;line-height:11px;color:#000;font-weight:normal;white-space:nowrap;letter-spacing:-0.25px;">Alle medewerkers</div>
<div style="position:absolute;left:1073px;top:761.69px;font-size:11px;line-height:11px;color:#000;font-weight:normal;white-space:nowrap;letter-spacing:-0.25px;">Eigen afdeling</div>
<div style="position:absolute;left:1073px;top:777.69px;font-size:11px;line-height:11px;color:#000;font-weight:normal;white-space:nowrap;letter-spacing:-0.25px;">Eigen medewerkergegevens</div>
<div style="position:absolute;left:1073px;top:793.69px;font-size:11px;line-height:11px;color:#000;font-weight:normal;white-space:nowrap;letter-spacing:-0.25px;">MDW: Laag 0 - &lt;omschrijving&gt;</div>
<div style="position:absolute;left:1073px;top:809.69px;font-size:11px;line-height:11px;color:#000;font-weight:normal;white-space:nowrap;letter-spacing:-0.25px;">MDW: Laag 1 - &lt;omschrijving&gt;</div>
<div style="position:absolute;left:1073px;top:825.69px;font-size:11px;line-height:11px;color:#000;font-weight:normal;white-space:nowrap;letter-spacing:-0.25px;">MDW: Laag 2 - &lt;omschrijving&gt;</div>
<div style="position:absolute;left:1073px;top:841.69px;font-size:11px;line-height:11px;color:#000;font-weight:normal;white-space:nowrap;letter-spacing:-0.25px;">MDW: Laag 3 - &lt;omschrijving&gt;</div>
<div style="position:absolute;left:1073px;top:857.69px;font-size:11px;line-height:11px;color:#000;font-weight:normal;white-space:nowrap;letter-spacing:-0.25px;">MDW: Laag 4 - &lt;omschrijving&gt;</div>
<div style="position:absolute;left:1073px;top:873.69px;font-size:11px;line-height:11px;color:#000;font-weight:normal;white-space:nowrap;letter-spacing:-0.25px;">MDW: Laag 5 - &lt;omschrijving&gt;</div>
<div style="position:absolute;left:1073px;top:889.69px;font-size:11px;line-height:11px;color:#000;font-weight:normal;white-space:nowrap;letter-spacing:-0.25px;">MDW: Laag 6 - &lt;omschrijving&gt;</div>
<div style="position:absolute;left:1073px;top:905.69px;font-size:11px;line-height:11px;color:#000;font-weight:normal;white-space:nowrap;letter-spacing:-0.25px;">MDW: Laag 7 - &lt;omschrijving&gt;</div>
<div style="position:absolute;left:1073px;top:921.69px;font-size:11px;line-height:11px;color:#000;font-weight:normal;white-space:nowrap;letter-spacing:-0.25px;">MDW: Laag 8 - &lt;omschrijving&gt;</div>
<div style="position:absolute;left:0px;top:0px;width:1468px;height:2px;background:#000;"></div>
<div style="position:absolute;left:0px;top:938px;width:1468px;height:2px;background:#000;"></div>
<div style="position:absolute;left:0px;top:0px;width:2px;height:940px;background:#000;"></div>
<div style="position:absolute;left:1466px;top:0px;width:2px;height:940px;background:#000;"></div></body></html>
